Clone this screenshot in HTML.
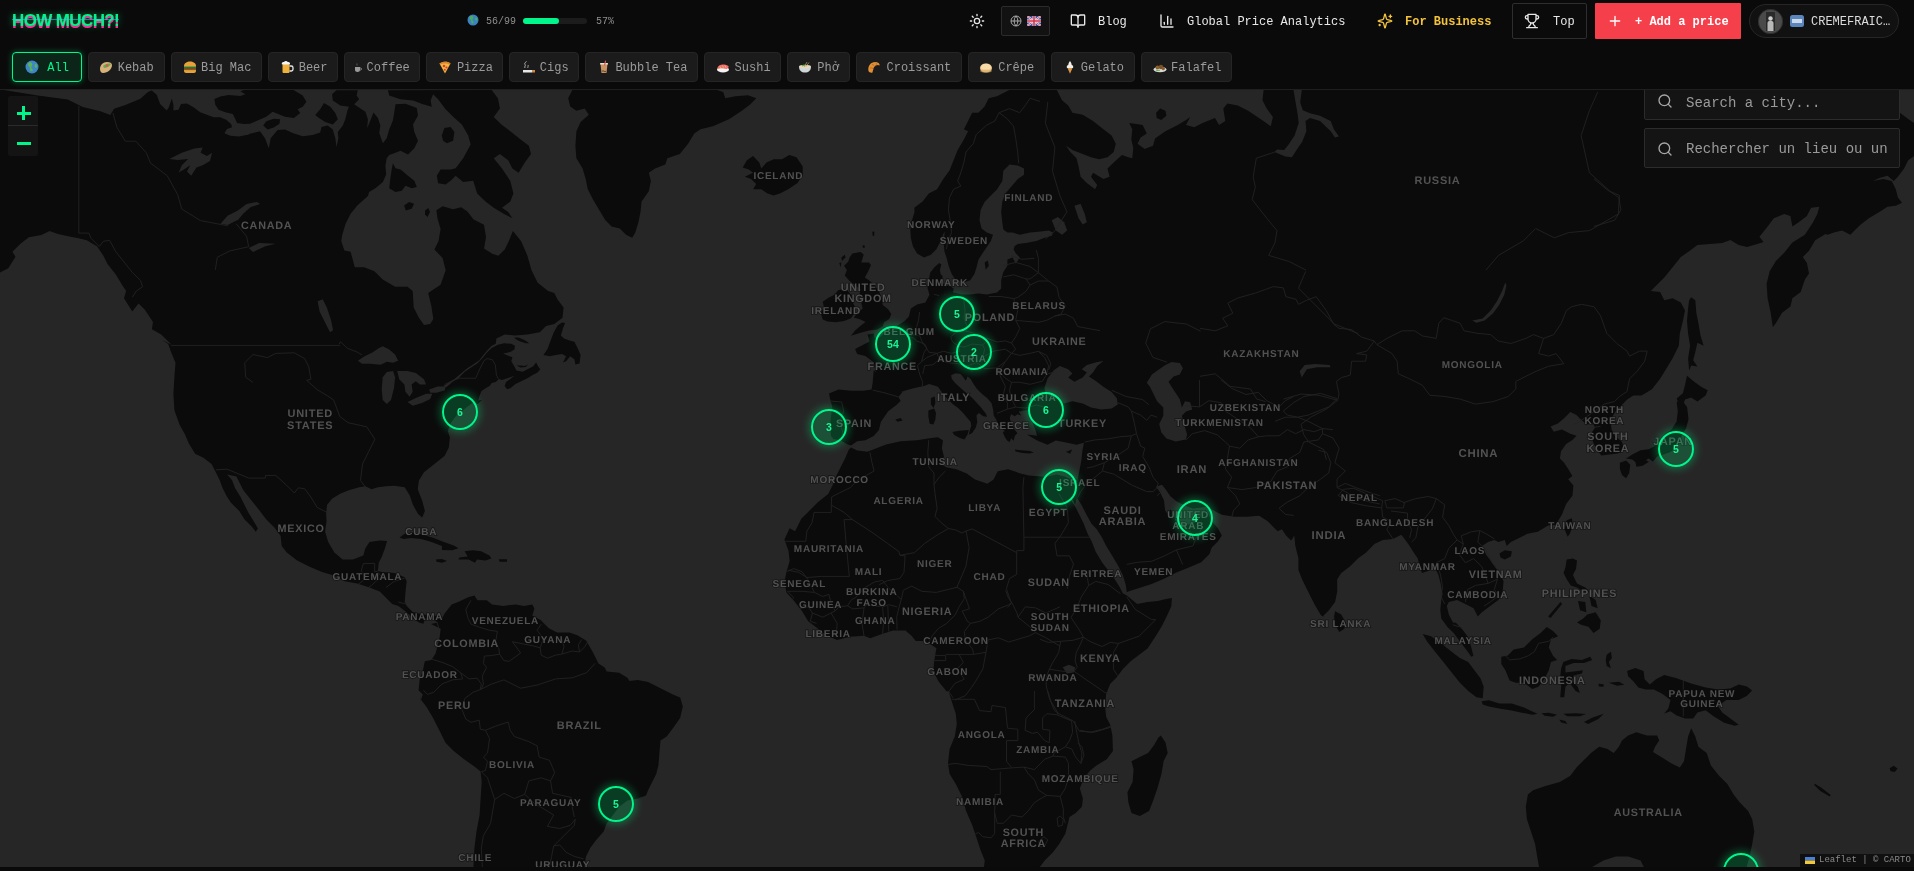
<!DOCTYPE html>
<html lang="en">
<head>
<meta charset="utf-8">
<title>HOW MUCH?! - Global Price Map</title>
<style>
*{box-sizing:border-box;margin:0;padding:0}
html,body{width:1914px;height:871px;overflow:hidden;background:#0a0a0a;color:#e5e5e5;font-family:"Liberation Mono","DejaVu Sans Mono",monospace;font-size:12px}
.abs{position:absolute}
#hdr{will-change:transform;position:absolute;left:0;top:0;width:1914px;height:90px;background:#0a0a0a;border-bottom:1px solid #1f1f1f;z-index:5}
#logo{position:absolute;left:12px;top:10px;font-family:"Liberation Sans",sans-serif;font-weight:bold;font-size:17px;letter-spacing:-0.62px;color:#00f58a;line-height:22px;white-space:nowrap;text-shadow:0 2px 0 #ff2d9a,0 0 7px rgba(0,255,136,.55)}
#logo i{position:absolute;left:0;right:0;top:9px;height:1px;background:#22d3ee;opacity:.55}
.t{position:absolute;white-space:nowrap;line-height:16px;height:16px}
.nav{color:#e8e8e8;font-size:12px;top:13.7px}
.ic{position:absolute}
.ic svg{display:block}
.btn{position:absolute;border:1px solid #2b2b2b;border-radius:2px}
#chips{position:absolute;left:0;top:52px;height:30px}
.chip{position:absolute;top:0;height:30px;background:#1b1b1b;border:1px solid #252525;border-radius:4px;color:#9b9b9b;font-size:12px;line-height:31px;white-space:nowrap}
.chip span{position:absolute;top:0}
.chip svg{position:absolute;top:7px}
.chip.on{background:#0b2519;border:1.5px solid #00f58a;color:#00f58a;box-shadow:0 0 6px rgba(0,255,136,.35)}
#map{will-change:transform;position:absolute;left:0;top:90px;width:1914px;height:777px;background:#262626;overflow:hidden}
#map svg.base{position:absolute;left:0;top:0}
.lbl{font-family:"Liberation Sans",sans-serif;font-weight:bold;font-size:10px;letter-spacing:.75px;fill:#525252;text-rendering:geometricPrecision;text-anchor:middle;paint-order:stroke;stroke:#0d0d0d;stroke-width:1.6px;stroke-opacity:.6}
.mk{position:absolute;width:36px;height:36px;margin:-18px 0 0 -18px;border-radius:50%;border:2.8px solid #00f58a;background:rgba(0,200,105,.26);box-shadow:0 0 9px 2px rgba(0,255,136,.33);color:#19f595;font-family:"Liberation Sans",sans-serif;font-size:10.5px;font-weight:bold;text-align:center;line-height:32.5px}
#zoom{position:absolute;left:8px;top:6px;width:30px;height:60px;background:#141414;border-radius:2px}
#zoom div{position:absolute;left:0;width:30px;height:30px}
#zoom b{position:absolute;background:#00f58a}
.sbox{position:absolute;left:1644px;width:256px;height:40px;background:#141414;border:1px solid #2c2c2c;border-radius:2px;color:#9a9a9a;font-size:14px}
.sbox span{position:absolute;left:41px;top:12px;line-height:16px;white-space:nowrap;overflow:hidden;width:203px}
.sbox svg{position:absolute;left:12px;top:12px}
#attr{position:absolute;left:1800px;top:764px;width:114px;height:13px;background:#101010;color:#8a8a8a;font-size:9px;line-height:13px;white-space:nowrap}
#foot{position:absolute;left:0;top:867px;width:1914px;height:4px;background:#0a0a0a}
</style>
</head>
<body>
<div id="hdr">
  <div id="logo">HOW MUCH?!<i></i></div>

  <!-- progress -->
  <div class="ic" style="left:467px;top:14px"><svg width="12" height="12" viewBox="0 0 12 12"><circle cx="6" cy="6" r="5.5" fill="#3b82c4"/><path d="M3 2.5c1.5-.8 3-.3 3.200 1 .2 1.200-1 1.500-.8 2.700.2 1 1.500 1.300 1.300 2.600-.6.900-2 .9-2.400-.4-.3-1.100.3-1.900-.6-2.700C2.700 4.900 2.200 3.500 3 2.500z" fill="#4caf50"/><path d="M8.500 3.500l1.500.5.300 2-1.300.8-.9-1.500z" fill="#4caf50"/></svg></div>
  <div class="t" style="left:486px;top:13.700px;font-size:10px;color:#8f8f8f">56/99</div>
  <div class="abs" style="left:523px;top:18px;width:64px;height:6px;border-radius:3px;background:#1c1c1c"><div style="width:36px;height:6px;border-radius:3px;background:#00f58a"></div></div>
  <div class="t" style="left:596px;top:13.700px;font-size:10px;color:#8f8f8f">57%</div>

  <!-- sun -->
  <div class="ic" style="left:969px;top:13px"><svg width="16" height="16" viewBox="0 0 24 24" fill="none" stroke="#e8e8e8" stroke-width="2" stroke-linecap="round"><circle cx="12" cy="12" r="4"/><path d="M12 2v2M12 20v2M4.900 4.900l1.400 1.400M17.700 17.700l1.400 1.400M2 12h2M20 12h2M4.900 19.100l1.400-1.400M17.700 6.300l1.400-1.400"/></svg></div>
  <!-- lang -->
  <div class="btn" style="left:1001px;top:6px;width:49px;height:29.500px;background:#121212">
    <svg class="abs" style="left:8px;top:8px" width="12" height="12" viewBox="0 0 24 24" fill="none" stroke="#a8a8a8" stroke-width="2"><circle cx="12" cy="12" r="10"/><path d="M2 12h20M12 2a15 15 0 0 1 0 20M12 2a15 15 0 0 0 0 20"/></svg>
    <svg class="abs" style="left:25px;top:9px" width="14" height="10" viewBox="0 0 14 10"><rect width="14" height="10" rx="1.500" fill="#3a4a9a"/><path d="M0 0l14 10M14 0L0 10" stroke="#e8e8f0" stroke-width="2"/><path d="M0 0l14 10M14 0L0 10" stroke="#d8324a" stroke-width=".8"/><path d="M7 0v10M0 5h14" stroke="#e8e8f0" stroke-width="3"/><path d="M7 0v10M0 5h14" stroke="#d8324a" stroke-width="1.600"/></svg>
  </div>
  <!-- blog -->
  <div class="ic" style="left:1070px;top:13px"><svg width="16" height="16" viewBox="0 0 24 24" fill="none" stroke="#e8e8e8" stroke-width="2" stroke-linecap="round" stroke-linejoin="round"><path d="M12 7v14"/><path d="M3 18a1 1 0 0 1-1-1V4a1 1 0 0 1 1-1h5a4 4 0 0 1 4 4 4 4 0 0 1 4-4h5a1 1 0 0 1 1 1v13a1 1 0 0 1-1 1h-6a3 3 0 0 0-3 3 3 3 0 0 0-3-3z"/></svg></div>
  <div class="t nav" style="left:1098px">Blog</div>
  <!-- analytics -->
  <div class="ic" style="left:1159px;top:13px"><svg width="16" height="16" viewBox="0 0 24 24" fill="none" stroke="#e8e8e8" stroke-width="2" stroke-linecap="round" stroke-linejoin="round"><path d="M3 3v16a2 2 0 0 0 2 2h16"/><path d="M18 17V9"/><path d="M13 17V5"/><path d="M8 17v-3"/></svg></div>
  <div class="t nav" style="left:1187px">Global Price Analytics</div>
  <!-- business -->
  <div class="ic" style="left:1377px;top:13px"><svg width="16" height="16" viewBox="0 0 24 24" fill="none" stroke="#f3c33c" stroke-width="2" stroke-linecap="round" stroke-linejoin="round"><path d="M9.900 15.500A2 2 0 0 0 8.500 14.100l-6.100-1.600a.5.5 0 0 1 0-1l6.100-1.600A2 2 0 0 0 9.900 8.500l1.600-6.100a.5.5 0 0 1 1 0l1.600 6.100a2 2 0 0 0 1.400 1.400l6.100 1.600a.5.5 0 0 1 0 1l-6.100 1.600a2 2 0 0 0-1.400 1.400l-1.600 6.100a.5.5 0 0 1-1 0z"/><path d="M20 3v4M22 5h-4M4 17v2M5 18H3"/></svg></div>
  <div class="t nav" style="left:1405px;color:#f3c33c;font-weight:bold">For Business</div>
  <!-- top -->
  <div class="btn" style="left:1512px;top:3px;width:75px;height:36px;border-color:#2e2e2e;background:#0b0b0b">
    <svg class="abs" style="left:11px;top:9px" width="16" height="16" viewBox="0 0 24 24" fill="none" stroke="#e8e8e8" stroke-width="2" stroke-linecap="round" stroke-linejoin="round"><path d="M6 9H4.500a2.500 2.500 0 0 1 0-5H6M18 9h1.500a2.500 2.500 0 0 0 0-5H18M4 22h16M10 14.700V17c0 .6-.5 1-1 1.200C7.800 18.800 7 20.200 7 22M14 14.700V17c0 .6.500 1 1 1.200 1.200.6 2 2 2 3.800M18 2H6v7a6 6 0 0 0 12 0z"/></svg>
    <div class="t" style="left:40px;top:9.700px;color:#e8e8e8">Top</div>
  </div>
  <!-- add -->
  <div class="abs" style="left:1595px;top:3px;width:146px;height:36px;background:#f5404c;border-radius:1px">
    <svg class="abs" style="left:12px;top:10px" width="16" height="16" viewBox="0 0 24 24" fill="none" stroke="#fff" stroke-width="2" stroke-linecap="round"><path d="M5 12h14M12 5v14"/></svg>
    <div class="t" style="left:40px;top:10.700px;color:#fff;font-weight:bold">+ Add a price</div>
  </div>
  <!-- user -->
  <div class="abs" style="left:1749px;top:4px;width:150px;height:34px;border:1px solid #262626;border-radius:17px;background:#111">
    <svg class="abs" style="left:8px;top:4px" width="25" height="25" viewBox="0 0 25 25"><circle cx="12.500" cy="12.500" r="12.200" fill="#4a4a4a" stroke="#2e2e2e"/><rect x="8" y="3" width="9" height="19" fill="#2a2a2a"/><path d="M9.500 22v-8c0-3 6-3 6 0v8z" fill="#b9b9b9"/><circle cx="12.500" cy="9.500" r="2.200" fill="#cfcfcf"/></svg>
    <svg class="abs" style="left:40px;top:10px" width="14" height="12" viewBox="0 0 14 12"><rect width="14" height="12" rx="2.500" fill="#5b86bd"/><rect x="2" y="4" width="10" height="4" fill="#dfe8f3" opacity=".85"/></svg>
    <div class="t" style="left:61px;top:8.700px;color:#dcdcdc">CREMEFRAIC…</div>
  </div>

  <div id="chips">
<div class="chip on" style="left:12.4px;width:69.2px"><svg width="14" height="14" viewBox="0 0 14 14" style="left:11.6px"><circle cx="7" cy="7" r="6.500" fill="#3f86c9"/><path d="M3.500 3c1.800-1 3.600-.4 3.800 1.200.2 1.400-1.200 1.800-1 3.200.3 1.200 1.800 1.600 1.600 3.100-.7 1.100-2.400 1.100-2.900-.5-.4-1.300.4-2.300-.7-3.200C3.100 5.800 2.500 4.200 3.500 3z" fill="#5bb450"/><path d="M10 4l1.800.6.400 2.400-1.600 1-1.100-1.800z" fill="#5bb450"/></svg><span style="left:33.9px">All</span></div>
<div class="chip" style="left:88.3px;width:76.6px"><svg width="14" height="14" viewBox="0 0 14 14" style="left:10.2px"><path d="M1 9c0-4 3-7 7-7 3 0 5 1 5 3 0 4-4 8-9 8-2 0-3-2-3-4z" fill="#d8b27a"/><path d="M4 6c2-2 5-3 8-2-1 2-4 4-7 4z" fill="#6aa84f"/><circle cx="8" cy="5.500" r="1.200" fill="#d9534f"/></svg><span style="left:28.4px">Kebab</span></div>
<div class="chip" style="left:171.2px;width:90.7px"><svg width="14" height="14" viewBox="0 0 14 14" style="left:10.8px"><path d="M1 6c0-3 3-4.500 6-4.500S13 3 13 6z" fill="#e9a23b"/><rect x="1" y="6" width="12" height="1.600" fill="#5cab3f"/><rect x="1" y="7.600" width="12" height="2.200" fill="#7a4a26"/><rect x="1" y="9.800" width="12" height="1" fill="#f2c230"/><path d="M1 10.800h12c0 1.500-1 2.200-2 2.200H3c-1 0-2-.7-2-2.200z" fill="#e9a23b"/></svg><span style="left:28.8px">Big Mac</span></div>
<div class="chip" style="left:268.2px;width:69.6px"><svg width="14" height="14" viewBox="0 0 14 14" style="left:10.8px"><rect x="2.500" y="4" width="7" height="9" rx="1" fill="#f0b13a"/><path d="M9.500 6h1.800c1 0 1.700.7 1.700 1.700v1.600c0 1-.7 1.700-1.700 1.700H9.500" fill="none" stroke="#e8e8e8" stroke-width="1.300"/><path d="M2 4.500c-.8-1.500.5-3 2-2.500.8-1.300 3-1.300 3.800 0 1.500-.5 2.800 1 2 2.500z" fill="#f5f5f5"/></svg><span style="left:29.5px">Beer</span></div>
<div class="chip" style="left:344.1px;width:75.9px"><svg width="14" height="14" viewBox="0 0 14 14" style="left:6.4px"><path d="M4 7h5v3c0 1-1 2-2.500 2S4 11 4 10z" fill="#9a9a9a"/><path d="M9 8h1c.6 0 .6 2 0 2H9" fill="none" stroke="#9a9a9a" stroke-width=".8"/><path d="M6 5.500c-.5-.8.500-1.200 0-2" stroke="#777" stroke-width=".7" fill="none"/></svg><span style="left:21.5px">Coffee</span></div>
<div class="chip" style="left:426.4px;width:76.3px"><svg width="14" height="14" viewBox="0 0 14 14" style="left:10.6px"><path d="M1.500 3.500C5 1 10 1 12.500 3.500L7 13.500z" fill="#f2b544"/><path d="M1.500 3.500C5 1 10 1 12.500 3.500l-.8 1.300C9.500 3 4.500 3 2.300 4.800z" fill="#d9822b"/><circle cx="6" cy="6" r="1.300" fill="#d8402f"/><circle cx="8.500" cy="7.500" r="1.100" fill="#d8402f"/><circle cx="6.800" cy="9.800" r="1" fill="#d8402f"/></svg><span style="left:29.5px">Pizza</span></div>
<div class="chip" style="left:509px;width:69.6px"><svg width="14" height="14" viewBox="0 0 14 14" style="left:12.0px"><rect x="1" y="10" width="9" height="2.500" fill="#e6e6e6"/><rect x="10" y="10" width="3" height="2.500" fill="#c98a4a"/><path d="M3 8c-1-1.500 1-2 0-3.500S4 2 4.500 1.500" fill="none" stroke="#b5b5b5" stroke-width="1"/><path d="M6 8c-.8-1 .8-1.700 0-3" fill="none" stroke="#b5b5b5" stroke-width=".9"/></svg><span style="left:29.8px">Cigs</span></div>
<div class="chip" style="left:585.3px;width:112.6px"><svg width="14" height="14" viewBox="0 0 14 14" style="left:11.2px"><path d="M3.500 4h7l-1 9h-5z" fill="#c99363"/><rect x="3" y="3" width="8" height="1.500" rx=".6" fill="#e9e2d6"/><rect x="7.500" y=".5" width="1.200" height="5" fill="#d9534f" transform="rotate(12 8 3)"/><circle cx="6" cy="11" r=".8" fill="#4a3424"/><circle cx="8" cy="11.500" r=".8" fill="#4a3424"/></svg><span style="left:29.1px">Bubble Tea</span></div>
<div class="chip" style="left:704.2px;width:76.6px"><svg width="14" height="14" viewBox="0 0 14 14" style="left:10.5px"><ellipse cx="7" cy="9.500" rx="6" ry="3" fill="#f4f4f4"/><path d="M1.500 7.500C3 4.500 7 3.500 12.500 6c.4 1.500-.5 2.700-2 3C7 8 4 8 1.500 9z" fill="#ef6f5e"/><path d="M4 6.500l1 1.700M6.500 5.600l1 2M9 5.500l1 2.200" stroke="#f9b5a8" stroke-width=".8"/></svg><span style="left:29.4px">Sushi</span></div>
<div class="chip" style="left:787.2px;width:62.5px"><svg width="14" height="14" viewBox="0 0 14 14" style="left:9.8px"><path d="M1 6.500h12c0 4-2.500 6-6 6s-6-2-6-6z" fill="#cfd6da"/><ellipse cx="7" cy="6.500" rx="6" ry="1.800" fill="#e7d9b5"/><path d="M4 6c1-.8 2-.8 3 0" stroke="#5cab3f" stroke-width="1.200" fill="none"/><path d="M9 2l-2.500 4.500M11 2.500L8 6.500" stroke="#a98b6a" stroke-width=".8"/></svg><span style="left:29.1px">Phở</span></div>
<div class="chip" style="left:856.4px;width:105.3px"><svg width="14" height="14" viewBox="0 0 14 14" style="left:10.1px"><path d="M1.500 11C.5 6 4 1.500 9 2c2.500.3 4 2 3.500 3.500-1-.8-3-1-4.500.500C6 8 6 10.500 5.500 12.500 4 13 2 12.500 1.500 11z" fill="#e08f35"/><path d="M3 8c1.500-.5 3 .3 3.600 1.500M5 4.500c1.500.2 2.600 1.300 2.800 2.500M8.500 2.800c1 .6 1.400 1.600 1.300 2.600" stroke="#b5651d" stroke-width=".8" fill="none"/></svg><span style="left:29.1px">Croissant</span></div>
<div class="chip" style="left:968.1px;width:76.6px"><svg width="14" height="14" viewBox="0 0 14 14" style="left:10.4px"><ellipse cx="7" cy="8" rx="6" ry="4.500" fill="#f0c88a"/><ellipse cx="7" cy="7.200" rx="5" ry="3.400" fill="#f7dcaa"/><ellipse cx="7" cy="11" rx="6" ry="1.600" fill="#d9a860" opacity=".6"/></svg><span style="left:29.1px">Crêpe</span></div>
<div class="chip" style="left:1051.4px;width:83.2px"><svg width="14" height="14" viewBox="0 0 14 14" style="left:10.6px"><path d="M4.500 8h5L7 13.800z" fill="#d9964a"/><path d="M4 8c-.8-1.500.3-2.800 1.300-3C5.300 3.500 6 2.500 7 1c1 1.500 1.700 2.500 1.700 4 1 .2 2.100 1.500 1.300 3z" fill="#f3efe6"/></svg><span style="left:28.4px">Gelato</span></div>
<div class="chip" style="left:1141.3px;width:90.3px"><svg width="14" height="14" viewBox="0 0 14 14" style="left:10.7px"><ellipse cx="7" cy="9.500" rx="6.500" ry="2.800" fill="#d8d8d8"/><circle cx="4.500" cy="7.500" r="2" fill="#8a5f2c"/><circle cx="8" cy="7" r="2.200" fill="#7a5226"/><circle cx="10.300" cy="8.500" r="1.700" fill="#8a5f2c"/><path d="M3 10c1.500.8 3 .8 4 0" stroke="#5cab3f" stroke-width="1" fill="none"/></svg><span style="left:28.8px">Falafel</span></div>
  </div>
</div>

<div id="map">
<svg class="base" width="1914" height="777" viewBox="0 0 1914 777">
<g id="land">
<path d="M0,0 3.8,0 37.6,5.5 67.7,9.5 82.8,17.1 100.3,21.3 110.3,25.1 114.1,18.8 125.4,15 140.4,8.8 148,2 151.7,0.5 156.7,4.7 160.1,13.9 166.8,20.6 168.8,17.2 171.8,8.5 173.4,14.7 173.4,20.6 178.5,19.7 181,13.9 186.8,13.5 193.5,17.2 200.2,22.2 206.9,24.8 213.6,27.3 220.3,27.3 226.1,29.8 231.1,34 232,37.3 227,39 224.4,43.2 230.3,45.7 238.7,46.5 247.9,44.8 250,43.8 260,41.3 265,48.2 268.8,58.2 270.7,48.2 277.6,40 285.1,39.4 292.6,43.1 302.7,46.3 312.7,45 320.2,42.5 321.5,36.9 327.7,35.6 332.8,39.4 335.3,48.2 336.5,56.9 338.4,48.2 337.8,41.9 342.8,35.6 345.3,29.3 347.8,19.3 349.1,16.8 340.3,15.6 332.8,10.5 332.1,4.3 336.5,0.3 357.8,0.3 356.6,5.5 359.1,9.3 354.1,14.3 357.8,16.8 365.4,21.8 367.9,29.3 367.2,38.1 370.4,30.6 373.5,22.5 377.9,28.1 380.4,35.6 379.2,43.1 382.9,53.2 386.7,48.2 389.2,39.4 392.9,30.6 394.2,23.1 395.5,14.3 405.5,13.7 416.8,18.1 418,25.6 413,34.4 414.3,41.9 418,50.7 414.3,58.2 408,64.5 400.5,60.7 394.2,63.2 389.2,65.1 386.7,68.2 385.4,75.7 386.1,84.5 382.9,92 375.4,98.3 369.1,102.1 367.9,106 357.3,115.4 350.6,123.7 345.6,133.8 342.2,145 341.3,151.3 344.4,160.6 350.6,161.7 354.8,177.2 364.1,177.2 374.4,181.3 382.7,189.6 395.1,196.8 407.5,196.8 412.7,201 413.7,217.5 418.9,227.8 424,235.1 430.2,234 433.3,228.9 431.3,215.4 428.2,203 440.6,194.8 445.7,180.3 442.6,167.9 434.4,159.6 438.5,151.3 440.6,138.9 437.5,128.6 436.4,120.3 442.6,116.2 453,119.3 461.2,117.2 467.4,121.4 473.6,129.6 484,134.8 486,147.2 484,158.6 492.2,163.7 498.4,165.8 504.7,159.6 508.8,151.3 512.9,141 521.2,151.3 527.4,165.8 531.5,180.3 537.7,192.7 548.1,201 554.3,203 557.4,209.2 563.6,217.5 562.5,227.8 554.3,234 546,236.1 539.8,242.3 527.4,244.4 515,245.4 504.7,244.4 496.4,248.5 495.8,253.8 491.7,255.8 487.5,260 483.4,265.1 479.3,270.3 473.1,274.4 466.9,278.6 460.7,283.7 454.5,288.9 448.3,293 443.1,296.1 446.2,297.2 452.4,292 458.6,287.9 464.8,281.7 471,277.5 477.2,273.4 482.4,268.2 486.5,263.1 491.7,257.9 497.9,254.8 504.1,253.3 511.3,253.8 514.9,255.8 514.4,259.5 510.3,262 506.1,263.1 503,263.6 508.2,265.7 512.4,267.2 511.3,271.3 514.4,276.5 516.5,280.6 522.7,281.7 528.9,278.6 533,276.5 536.1,272.4 538.2,276.5 540.3,279.6 537.2,282.7 533,284.8 527.9,287.9 521.7,291 515.5,294.1 510.3,298.2 507.2,299.3 504.6,296.1 506.1,292 510.3,288.9 514.4,285.8 508.2,287.9 502,289.9 498.9,288.9 495.8,292 491.7,293 489.6,296.1 485.5,298.2 481.3,301.3 479.3,306.5 478.2,310.6 481.9,309.9 477.8,314.1 473.6,312 465.4,318.2 457.1,324.4 450.9,332.7 447.8,341 449.9,347.2 448.8,357.5 444.7,365.8 434.4,374 424,382.3 418.9,390.6 417.8,398.8 418.1,400.3 422.2,410.7 424.9,421 422.2,427.6 418.1,424.1 412.9,414.8 409.8,405.5 404.7,397.2 394.3,395.8 386,396.2 377.8,397.2 371.6,399.3 365.4,396.2 359.2,397.2 348.8,400.3 340.6,403.4 332.3,408.6 327.1,414.8 326.1,423.1 326.5,431.3 325.1,441.7 328.2,452 334.4,462.4 342.6,469.6 353,469.6 363.3,465.5 365.4,458.2 369.5,452 379.8,450.6 387.1,451 385,458.2 381.9,466.5 378.8,472.7 377.8,481 381.9,482 394.3,483 404.7,487.2 406.7,491.3 405.7,499.6 404.7,512 406.7,516.1 412.9,522.3 423.3,524.4 433.6,525.4 441.9,526.4 440.8,538.8 437.7,532.6 431.5,527.5 425.3,528.5 423.3,533.7 419.1,532.6 412.9,528.5 406.7,522.3 398.4,516.1 392.2,514 386,507.8 379.8,501.6 369.5,497.5 357.1,493.4 344.7,491.3 332.3,485.1 322,482 309.6,476.8 297.2,470.6 286.8,462.4 281.7,456.1 280.6,445.8 274.4,437.5 266.1,429.3 259.9,421 251.7,410.7 243.4,400.3 238.2,390 236.4,386.4 227.1,384.4 232,390 235.1,398.3 240.3,406.5 244.4,414.8 248.6,423.1 253.7,431.3 257.9,438.6 255.8,441.7 251.7,436.5 244.4,429.3 239.3,421 231,412.7 226.9,406.5 222.7,398.3 219.6,390 215.8,382.3 211.6,374 203.4,367.8 195.1,363.7 188.9,353.4 184.8,344.1 179.6,334.8 174.4,320.3 173.4,303.7 174.4,287.2 175.5,272.7 171.3,262.4 168.2,254.1 162,250 171.6,254.7 161.2,244.4 151.9,239.2 153,232 144.7,219.6 138.5,213.4 132.3,221.6 124,208.2 126.1,201 122,194.8 115.8,184.4 107.5,174.1 103.4,165.8 97.2,156.5 86.8,150.3 78.6,148.2 68.2,146.2 57.9,144.1 49.6,141 41.3,145.1 28.9,147.2 20.7,153.4 12.4,161.7 15.5,166.8 8.3,178.2 0,182.4Z" fill="#0b0b0b"/>
<path d="M431,534.1 437.6,532.6 441.3,529.9 444.4,523.7 451.7,514.4 459.9,511.3 468.2,507.2 474.4,505.6 477.5,510.3 486.8,510.3 492,514.4 503.4,515.9 515.8,514.4 524,515.9 532.3,514.4 534.4,518.6 532.3,525.8 540.6,529.9 548.8,538.2 557.1,542.4 569.5,542.4 577.8,545.5 586,550.6 592.2,561 596.4,569.2 598.4,573.4 604.7,577.5 606.7,581.6 619.1,582.7 627.4,587.8 629.5,590.9 637.7,589.9 648.1,592 660.5,598.2 672.9,604.4 680.1,607.5 680.1,607.2 682.8,616.5 680.1,627.9 672.9,638.2 666.7,646.5 660.5,650.6 659.4,663 658.4,675.4 656.3,683.7 652.2,692 648.1,700.2 646,705.4 637.7,708.5 627.4,710.6 619.1,716.8 606.7,733.3 603.6,741.6 596.4,749.8 590.2,758.1 586,766.4 584,778.8 473.4,778.8 474.4,758.1 476.5,741.6 479.6,725 480.6,708.5 481.7,692 480.6,681.6 474.4,676.5 464.1,669.2 453.7,660.9 445.5,652.7 439.3,640.3 433.1,627.9 426.9,617.5 420.7,609.3 419.6,601 420.7,610.6 422.7,604.4 418.6,600.2 419.6,589.9 422.7,581.6 424.8,571.3 431.4,570.1 435.6,563.6 437.6,555.4 439.7,547.1 440.7,538.8Z" fill="#0b0b0b"/>
<path d="M399.5,447.5 404.7,443.7 412.9,442.7 423.3,444.8 433.6,447.9 443.9,452 454.3,455.7 458.4,458.2 452.2,460.3 441.9,459.9 441.9,456.1 431.5,452 421.2,448.9 410.9,447.9 403.6,448.9Z" fill="#0b0b0b"/>
<path d="M464.6,461.3 472.9,460.3 481.1,461.3 489.4,465.5 491.5,468.6 485.3,470.6 477,469.6 474.9,472.7 468.7,469.6 458.4,469.6 459.4,467.5 467.7,466.5Z" fill="#0b0b0b"/>
<path d="M435.7,469.6 441.9,469 447,471 441.9,472.7 436.7,471.7Z" fill="#0b0b0b"/>
<path d="M498.7,469.2 507,469.2 507,471.7 499.7,471.7Z" fill="#0b0b0b"/>
<path d="M543.4,265.1 547.5,258.9 550.6,250.7 553.7,242.4 557.8,235.2 562,232.6 565.1,233.1 563,238.3 560.9,245.5 564,248.6 570.2,250.7 574.4,251.7 576.4,255.8 578.5,260 580.6,265.1 579.5,273.4 575.4,274.4 574.4,269.3 570.2,266.2 566.1,271.3 563,272.4 566.1,266.2 562,264.1 555.8,265.1 549.6,266.2Z" fill="#0b0b0b"/>
<path d="M514.4,247.6 518.6,247.6 524.8,250.2 529.4,253.3 525.8,253.3 519.6,251.2 515.5,249.1Z" fill="#0b0b0b"/>
<path d="M516.5,275.5 520.6,277.5 525.8,277 527.9,274.4 524.8,276 520.6,275.5Z" fill="#0b0b0b"/>
<path d="M357.9,270.7 364.1,266.5 372.4,262.4 378.6,258.3 382.7,256.2 388.9,259.3 395.1,264.5 398.2,270.7 393,272.7 386.8,271.7 380.6,274.8 370.3,273.8 362,273.8Z" fill="#262626"/>
<path d="M382.7,287.2 386.8,282 393,281 395.1,287.2 394.1,297.5 391,309.9 386.8,314.1 382.7,309.9 381.7,299.6Z" fill="#262626"/>
<path d="M397.2,281 407.5,281 415.8,283.1 424,289.3 426.1,294.4 419.9,294.4 415.8,291.3 411.6,294.4 412.7,301.7 409.6,306.8 405.4,301.7 404.4,294.4 399.2,289.3Z" fill="#262626"/>
<path d="M407.5,312 415.8,307.9 426.1,303.7 432.3,303.7 430.2,308.9 422,313 412.7,315.7Z" fill="#262626"/>
<path d="M429.2,299.6 437.5,296.5 445.7,296.5 444.7,300.6 436.4,302.7 430.2,302.7Z" fill="#262626"/>
<path d="M317.6,211.3 322.7,209.2 326.9,217.5 331,229.9 333.1,240.2 330,242.3 324.8,232 319.6,221.6Z" fill="#262626"/>
<path d="M169.3,69.1 181.8,62.8 194.3,58.6 202.7,57.6 200.6,62.8 206.9,65.9 212.1,62.8 210,71.1 202.7,75.3 196.4,77.4 191.2,85.8 187,81.6 190.2,75.3 183.9,79.5 178.7,82.6 181.8,75.3 188.1,69.1 177.6,70.1Z" fill="#262626"/>
<path d="M220.5,133.8 227.8,125.5 232,123.4 238.2,120.3 246.6,114 257,111.9 260.2,114 250.8,117.1 243.4,123.4 238.2,129.7 234,131.8 227.8,134.9Z" fill="#262626"/>
<path d="M248.7,157.9 259.1,153.1 275.8,153.7 265.4,156.2 252.9,162.1Z" fill="#262626"/>
<path d="M214.4,8.9 220.3,6.4 228.6,5.1 240.3,5.9 245.4,4.3 240.3,1.3 245.4,-0.5 293.9,-0.5 293.9,0.3 302.7,5.5 306.4,11.8 302.7,16.8 297.6,19.3 300.2,23.1 293.9,28.1 285.1,26.8 278.8,24.3 272.6,21.8 266.3,26.8 257.5,30.6 250,33.7 243.7,34 237,33.1 235.3,28.9 232.8,23.9 225.3,22.2 218.6,19.7 215.3,14.7Z" fill="#0b0b0b"/>
<path d="M263.2,35.6 266.3,31.2 273.8,28.7 280.1,29.3 279.5,33.7 273.8,37.5 267.6,39.4Z" fill="#0b0b0b"/>
<path d="M315.2,25 320.2,19.3 324,13 330.3,16.8 335.3,23.1 337.8,29.3 332.8,34.4 325.2,31.9 319,28.1Z" fill="#0b0b0b"/>
<path d="M441.8,45.6 444.4,38.1 450.6,36.9 454.4,41.9 453.1,50.7 446.9,53.2 443.1,50.7Z" fill="#0b0b0b"/>
<path d="M392.9,73.2 395.5,78.3 400.5,79.5 408,85.8 414.3,90.8 416.8,97.1 411.8,98.3 405.5,95.8 401.7,100.8 395.5,102.1 389.2,98.3 390.4,88.3 391.7,79.5Z" fill="#0b0b0b"/>
<path d="M404.1,115.4 409.1,112 414.1,113.7 411.6,118.7 405.8,120.4Z" fill="#0b0b0b"/>
<path d="M425,120.4 428.3,117.9 430,122.1 427.5,127.1 425,124.6Z" fill="#0b0b0b"/>
<path d="M387.9,0.3 389.2,5.5 400.5,9.3 413,10.5 423,14.3 431.8,16.8 430.6,10.5 433.1,4.3 438.1,9.3 445.6,19.3 453.1,26.8 461.9,34.4 468.2,45.6 470.7,54.4 463.2,68.2 455.6,78.3 450.6,79.5 440.6,79.5 436.8,85.8 438.1,93.3 445.6,94.6 450.6,90.8 455.6,85.8 463.2,92 473.2,90.8 477.2,103.4 485.5,111.6 493.7,117.8 504.1,124 512.4,128.2 508.2,122 502,117.8 510.3,111.6 513.4,103.4 510.3,91 502,78.6 493.7,68.2 499.9,64.1 508.2,70.3 512.4,78.6 518.6,82.7 524.8,72.4 531,64.1 528.9,55.8 520.6,49.6 510.3,41.3 502,35.1 493.7,26.9 499.9,18.6 497.9,8.3 491.7,0Z" fill="#0b0b0b"/>
<path d="M572.3,0 568.2,8.3 570.2,16.5 576.4,20.7 584.7,18.6 588.8,24.8 580.6,32 576.4,41.3 575.4,55.8 576.4,68.2 582.6,78.6 585.7,88.9 587.8,99.2 593,109.6 599.2,119.9 605.4,130.2 611.6,136.4 619.8,138.5 626,144.7 632.2,147.8 635.3,142.6 638.4,132.3 640.5,122 641.6,111.6 648.8,101.3 650.9,91 648.8,82.7 655,78.6 665.3,74.4 667.4,68.2 679.8,64.1 688.1,53.7 694.3,43.4 700.5,39.3 712.9,36.2 729.4,28.9 741.8,20.7 750.1,14.5 756.3,8.3 748,5.2 735.6,6.2 725.3,8.3 723.2,2.1 717,0Z" fill="#0b0b0b"/>
<path d="M742.7,77.5 746.9,70.3 753.1,66.1 759.3,72.4 761.3,78.6 766.5,72.4 773.7,69.3 782,69.3 789.3,65.1 796.5,67.2 802.7,76.5 802.7,84.8 797.5,93 788.2,99.2 779.9,103.4 773.7,105.4 767.5,103.4 761.3,99.2 753.1,99.2 756.2,94.1 751,88.9 744.8,86.8 753.1,82.7 748.9,79.6Z" fill="#0b0b0b"/>
<path d="M1009.3,0 1056.8,0 1062,10.3 1068.2,15.5 1072.4,22.7 1082.7,24.8 1093,31 1103.4,39.3 1111.6,45.5 1115.8,53.7 1113.7,62 1107.5,67.2 1099.2,69.3 1091,67.2 1082.7,64.1 1072.4,59.9 1066.1,55.8 1070.3,62 1076.5,68.2 1078.6,76.5 1080.6,86.8 1086.8,93 1095.1,99.2 1097.2,95.1 1091,86.8 1093,82.7 1103.4,88.9 1109.6,86.8 1107.5,78.6 1113.7,72.4 1122,65.1 1128.2,67.2 1132.3,68.2 1133.3,57.9 1131.3,49.6 1132.3,39.3 1129.2,33.1 1136.4,34.1 1142.6,35.1 1146.8,43.4 1140.6,47.5 1137.5,53.7 1144.7,58.9 1153,55.8 1155,48.6 1165.4,41.3 1177.8,35.1 1186,30 1190.2,26.9 1186,35.1 1194.3,37.2 1202.6,33.1 1215,27.9 1219.1,35.1 1225.3,31 1223.3,18.6 1227.4,13.4 1237.7,15.5 1248.1,20.7 1260.5,28.9 1270.8,36.2 1272.9,26.9 1266.7,18.6 1262.5,10.3 1263.6,0 1293.5,0 1295.6,12.4 1297.7,24.8 1298.7,33.1 1294.6,45.5 1288.4,54.8 1284.2,59.9 1277,59.5 1274.5,62 1285.3,66.6 1291.9,67.2 1296.6,59.9 1302.2,51.7 1306.4,41.3 1305.5,31 1310.1,27.9 1320,31 1330.7,41.3 1334.9,47.5 1339,46.5 1333.9,39.3 1330.7,31 1320,25.8 1310.1,23.2 1302.8,20.3 1300.2,12.4 1301.8,0 1899.9,0 1899.9,22.7 1908.2,28.9 1914,33.1 1914,66.1 1908.2,70.3 1904.1,78.6 1897.9,86.8 1893.7,91 1887.5,85.8 1879.3,87.9 1873.1,91 1883.4,88.9 1891.7,91 1895.8,99.2 1897.9,107.5 1902,112.7 1895.8,115.8 1887.5,116.8 1879.3,122 1868.9,128.2 1860.7,134.4 1854.5,140.6 1850.3,144.7 1842.1,140.6 1833.8,142.6 1827.6,144.7 1825.5,144.1 1815.2,150.3 1809,160.7 1802.8,166.9 1806.9,173.1 1809,183.4 1804.9,189.6 1800.7,202 1792.4,208.2 1790.4,216.5 1782.1,222.7 1775.9,233 1772.8,237.2 1770.7,222.7 1767.6,208.2 1766.6,193.7 1769.7,181.3 1775.9,171 1784.2,162.7 1792.4,152.4 1804.9,144.7 1813.1,132.3 1817.3,124 1819.3,116.8 1811.1,117.8 1806.9,126.1 1798.7,132.3 1792.4,136.4 1790.4,126.1 1784.2,124 1773.8,128.2 1767.6,136.4 1759.4,146.8 1763.5,151.9 1757.3,154 1747,157.1 1738.7,155 1730.4,149.9 1722.2,153 1709.8,154 1697.4,155 1689.1,161.2 1680.8,166.9 1672.6,177.2 1664.3,187.5 1656,195.8 1650.8,201 1660.1,202 1664.3,210.3 1672.6,208.2 1680.8,212.4 1685,220.6 1682.9,231 1679.8,243.4 1678.8,255.8 1672.6,268.2 1666.4,278.5 1660.1,288.8 1651.9,299.2 1641.5,305.4 1633.3,305.4 1627.1,309.5 1619.9,316.9 1615.8,321 1612.7,326.2 1610.6,331.3 1611.6,339.6 1614.7,345.8 1622,352 1624,360.3 1617.8,363.4 1609.6,364.4 1601.3,365.5 1597.2,360.3 1593,352 1591,343.7 1595.1,337.5 1593,333.4 1586.8,334.4 1580.6,329.3 1576.5,325.1 1570.3,322 1564.1,328.2 1557.9,333.4 1550.6,336.5 1553.7,341.7 1562,339.6 1570.3,343.7 1576.5,345.8 1572.4,349.9 1566.1,354.1 1561,361.3 1559.9,368.6 1564.1,372.7 1568.2,378.9 1572.4,386.1 1568.2,389.2 1573.4,395.4 1572.4,405.8 1566.1,414 1562,424.4 1555.8,434.7 1548.1,435.5 1537.7,441.7 1527.4,443.7 1519.1,447.9 1510.9,452 1506.7,456.1 1504.7,449.9 1498.4,452 1494.3,449.9 1488.1,452 1481.9,456.1 1486,464.4 1492.2,472.7 1498.4,481 1503.6,491.3 1502.6,501.6 1498.4,509.9 1490.2,516.1 1481.9,522.3 1477.8,526.4 1473.6,518.2 1465.4,514 1457.1,509.9 1448.8,512 1446.8,516.1 1448.8,524.4 1453,532.6 1455.8,532.7 1462,538.9 1468.2,547.2 1471.3,557.5 1473.4,565.8 1471.3,566.8 1466.1,559.6 1459.9,551.3 1453.7,543.1 1447.5,536.9 1441.3,528.6 1440.3,520.3 1441.3,510 1442.6,503.7 1440.6,493.4 1438.5,485.1 1434.4,476.8 1428.2,481 1422,483 1419.9,476.8 1417.8,468.6 1413.7,462.4 1409.6,456.1 1405.4,449.9 1401.3,444.8 1393,448.9 1382.7,449.9 1374.4,454.1 1366.1,462.4 1357.9,468.6 1349.6,476.8 1341.3,483 1337.2,489.2 1337.2,501.6 1335.1,512 1328.9,520.2 1322.7,526.4 1326.3,527.5 1321.1,525.5 1314.9,515.1 1308.7,502.7 1302.5,490.3 1298.4,480 1298.4,468.2 1295.3,455.8 1294.3,445.4 1291.2,450.6 1286,445.4 1281.9,439.2 1277.7,441.3 1273.6,437.2 1267.4,431 1259.1,425.8 1246.7,426.8 1234.3,426.8 1221.9,424.8 1211.6,419.6 1207.4,416.5 1201.2,417.5 1193,418.6 1184.7,415.5 1176.4,411.3 1170.2,406.1 1166.1,399.9 1162,394.8 1155.8,396.8 1159.9,402 1164,410.3 1165.1,420.6 1168.2,424.8 1170.2,419.6 1173.3,422.7 1175.4,431 1182.6,435.1 1193,434.1 1201.2,426.8 1205.4,419.6 1207.4,422.7 1211.6,431 1217.8,438.2 1221.9,445.4 1217.8,451.6 1211.6,457.8 1209.5,464 1201.2,472.3 1188.8,477.5 1176.4,482.6 1164,488.8 1151.6,494 1139.2,498.1 1128.9,501.2 1126.8,502.3 1125.8,495 1122.7,484.7 1118.6,476.4 1112.4,466.1 1106.1,455.8 1102,447.5 1096.8,439.2 1091.7,434.1 1086.5,424.8 1081.3,414.4 1077.2,408.2 1076.2,399.9 1077.2,391.7 1079.3,381.3 1081.3,371 1082.4,360.7 1084.4,350.3 1085.8,358.8 1084.8,352.6 1076.5,354.7 1066.1,352.6 1055.8,350.6 1047.5,354.7 1037.2,350.6 1026.9,344.4 1037,345.8 1035.7,340.7 1033.8,335.7 1031.3,329.3 1030.1,324.3 1028.8,319.9 1023.7,320.5 1018.7,321.8 1021.2,325.6 1017.4,324.3 1014.9,326.2 1011.1,324.3 1009.8,328.1 1011.1,333.1 1013.6,338.2 1017.4,343.2 1014.9,345.8 1013.6,350.8 1011.1,348.3 1009.8,352.1 1007.3,350.8 1004.8,347 1002.9,342.6 1004.8,340.7 1001,338.2 998.5,334.4 996,329.3 993.7,325.6 993.2,319.9 991.5,312.9 987.1,307.9 982.1,304.1 977,299 973.2,293.4 970.7,288.9 967.6,286.4 965.7,290.8 963.1,287 960.6,283.9 955.6,283.3 951.1,285.2 951.8,288.9 955.6,293.4 963.1,300.3 970.7,306.6 975.8,311.7 980.8,317.3 985.9,323.7 987.1,326.8 983.3,326.2 978.9,323 976.4,325.6 977.3,331.9 975.8,337.6 972.2,343 968.8,344.7 969.7,340.7 971.3,335.7 970.7,331.9 966.9,327.4 963.1,323 958.1,318 953,314.2 949.2,310.4 944.2,305.4 940.4,300.3 937.9,296.8 933.5,295.3 929,294 924,295.9 918.9,297.1 912.6,298.4 906.3,300.3 900,302.2 902.6,301.7 898.5,306.9 900.6,311 896.4,315.1 888.2,321.3 880.9,331.7 878.9,339.9 873.7,346.1 865.4,350.3 857.2,351.3 851,355.5 846.8,354 840.4,350.3 833.6,349 831.1,345.9 830.1,335.8 831.1,325.7 832.4,316.8 830.5,310.6 829,303.6 838.6,299.6 851,300.7 863.4,300.7 871.6,299.6 872.7,292.4 873.7,280 875.8,282.6 873.7,272.3 865.4,266.1 857.2,264 855.1,258.9 861.3,255.8 869.6,251.6 867.5,244.4 873.7,243.4 874.7,248.5 879.9,247.5 884,243.4 890.2,239.2 898.5,235.1 904.7,231 908.8,226.8 910.9,218.6 917.1,214.4 925.4,212.4 929.5,204.8 927.5,197.9 928.9,189.6 930.2,182.7 934.4,177.2 939.2,173.1 941.3,174.5 939.9,180 940.6,184.1 942.6,186.2 942,192.4 944.7,195.1 946.1,200.6 944,205.5 944.4,204.6 953.7,202.6 962,204.6 970.2,204.6 978.5,203.6 986.8,204.6 997.1,202.6 1001.2,198.4 1001.2,190.2 1003.3,181.9 1007.4,175.7 1007.4,169.5 1012.6,167.4 1015.7,173.6 1019.8,167.4 1015.7,163.3 1013.6,159.2 1014.7,156.1 1017.8,154 1026,153 1036.4,150.9 1044.6,147.8 1051.9,145.7 1052.9,142.6 1048.8,140.6 1040.5,141.6 1030.2,142.6 1019.8,144.7 1012.6,142.6 1007.4,142.6 1003.3,139.5 1002.3,132.3 1001.2,122 1002.3,111.7 1005.4,103.4 1011.6,96.2 1017.8,88.9 1024,84.8 1024,78.6 1017.8,75.5 1009.5,74.5 1003.3,80.7 1002.3,91 997.1,99.3 990.9,105.5 984.7,111.7 980.6,119.9 979.5,130.2 981.6,138.5 986.8,142.6 993,144.7 990.9,150.9 986.8,157.1 982.6,163.3 978.5,169.5 976.4,177.8 974.4,184 970.2,190.2 964,192.2 955.8,190.2 951.7,184 948.6,175.7 946.5,167.4 944.4,161.2 943.8,153 944.7,141.4 943.3,144.1 940.6,151 936.4,159.3 930.9,164.8 924,167.6 917.1,163.4 913,156.5 910.9,148.3 910.3,140 911.4,132.3 914.5,122 914.3,117.8 922.6,111.6 928.8,103.4 937.1,99.2 943.3,88.9 949.5,80.6 953.6,70.3 957.7,59.9 963.9,49.6 968.1,41.3 963.9,39.3 968.1,31 972.2,22.7 978.4,22.7 984.6,16.5 988.7,8.3 997,6.2 1009.4,0Z" fill="#0b0b0b"/>
<path d="M942.4,197.4 948.6,195.3 953.7,198.4 952.7,203.6 946.5,204.6 942.4,202.6Z" fill="#0b0b0b"/>
<path d="M984.7,172.6 987.8,170.5 988.8,175.7 985.7,179.8Z" fill="#0b0b0b"/>
<path d="M1156.1,22.7 1160.2,18.6 1165.4,20.7 1166.4,25.8 1161.2,30 1156.7,27.9Z" fill="#0b0b0b"/>
<path d="M851,357.5 857.2,360.6 867.5,361.7 875.8,358.6 886.1,354.4 900.6,351.3 917.1,350.3 929.5,348.2 937.8,347.2 942.9,350.3 941.9,358.6 944,366.8 939.8,373 946,377.2 956.4,379.2 966.7,383.4 975,389.6 987.4,393.7 993.6,389.6 997.7,381.3 1008.1,379.2 1020.5,383.4 1028.7,385.4 1041.1,386.5 1048.3,386.5 1056.5,384.4 1064.8,386.5 1071,389.6 1076.2,398.9 1076.8,407.2 1075.1,414.4 1071,407.2 1071,410.3 1075.1,416.5 1079.3,424.8 1083.4,433 1087.5,443.4 1091.7,451.6 1095.8,462 1102,472.3 1108.2,480.6 1114.4,488.8 1119.6,497.1 1122.7,503.3 1126.8,505.4 1131,508.9 1137.2,514.1 1147.5,512 1157.8,511 1166.1,508.9 1171.9,507.9 1171.3,516.2 1167.1,525.5 1162,535.8 1155.8,546.1 1147.5,558.6 1139.2,564.8 1131,571 1122.7,579.2 1116.5,587.5 1110.3,593.7 1106.1,604 1105.1,616.4 1106.1,626.8 1110.3,635 1112.4,645.4 1112.9,660.9 1106.7,669.2 1096.4,675.4 1090.2,680.6 1084,687.8 1079.8,698.2 1082.9,708.5 1081.9,716.8 1075.7,723 1069.5,727.1 1067.4,735.4 1065.4,743.6 1059.2,754 1053,762.2 1044.7,770.5 1038.5,778.8 983.7,778.8 984.8,770.5 980.6,760.2 976.5,747.8 972.4,735.4 966.1,720.9 962,706.4 955.8,694 949.6,683.7 948,673.4 949.6,658.9 954.8,646.5 956.8,634.1 955.8,623.7 951.7,611.3 948.6,601 946.7,601.6 938.4,591.2 933.3,580.9 934.3,570.6 936.4,558.2 930.2,554 924,550.9 915.7,550.9 911.6,545.8 905.4,540.6 893,540.6 882.6,543.7 870.2,548.2 864,545.8 849.6,546.8 837.2,549.9 826.8,545.8 816.5,537.5 808.2,531.3 802,521 793.7,510.6 786.5,502.4 784.4,492 786.5,481.7 789.6,471.3 788.6,461 784.4,449.6 789.6,438.3 795.1,441.2 801.3,428.8 809.6,420.6 817.9,412.3 828.2,404 832.4,395.8 836.5,385.4 840.6,377.2 844.8,368.9 848.9,359.6Z" fill="#0b0b0b"/>
<path d="M1160.9,645.4 1165.6,652.7 1167.7,663 1163.6,671.3 1161.5,683.7 1157.4,698.2 1153.2,710.6 1149.1,720.9 1139.8,726.1 1131.5,723 1128.4,712.6 1127.4,702.3 1132.6,692 1133.6,679.6 1131.5,671.3 1139.8,667.1 1148.1,663 1154.3,654.7 1158.4,647.5Z" fill="#0b0b0b"/>
<path d="M1044.4,297.9 1047.5,288.6 1053.7,280.3 1059.9,276.1 1068.2,279.3 1072.4,283.4 1068.2,287.5 1074.4,291.7 1082.7,287.5 1086.8,282.4 1081.7,279.3 1086.8,275.1 1097.2,272 1103.4,271 1097.2,276.1 1093,282.4 1088.9,286.5 1095.1,290.6 1103.4,296.8 1111.6,302 1116.8,308.2 1117.8,314.4 1111.6,318.5 1101.3,319.6 1091,317.5 1082.7,313.4 1072.4,311.3 1064.1,313.4 1057.9,309.2 1051.7,307.2 1045.5,303Z" fill="#262626"/>
<path d="M1146.8,292.7 1151.9,284.4 1159.2,279.3 1165.4,275.1 1171.6,272 1179.8,273 1182.9,278.2 1179.8,284.4 1173.6,286.5 1168.5,291.7 1171.6,296.8 1175.7,303 1179.8,309.2 1181.9,317.5 1185,311.3 1190.2,312.3 1192.2,319.6 1186,321.6 1181.9,325.8 1184,334 1187.1,344.4 1186,349.5 1175.7,351.6 1166.4,348.5 1161.2,342.3 1159.2,334 1163.3,325.8 1163.3,317.5 1157.1,311.3 1153,303 1149.9,296.8Z" fill="#262626"/>
<path d="M1051.7,130.2 1057.9,127.1 1064.1,132.3 1067.2,140.6 1062,144.7 1055.8,140.6Z" fill="#262626"/>
<path d="M1074.4,115.8 1080.6,113.7 1084.8,124 1086.8,132.3 1082.7,134.4 1078.6,128.2Z" fill="#262626"/>
<path d="M1472.2,230.6 1482.6,228.6 1490.9,220.3 1497.1,211 1502.2,200.7 1505.3,192.4 1506.4,195.5 1504.3,204.8 1499.1,215.1 1492.9,223.4 1484.7,230.6 1476.4,232.7Z" fill="#262626"/>
<path d="M1299.6,281.3 1304.8,275.1 1315.1,274.1 1329.6,275.1 1330.6,277.2 1317.2,277.2 1306.9,279.2 1301.7,287.5Z" fill="#262626"/>
<path d="M1062.7,577.2 1068.9,574.7 1075.1,577.2 1074.1,582.3 1066.9,583.4Z" fill="#262626"/>
<path d="M952.4,342 959.3,340.7 968.8,340.1 967.6,344.5 964.4,349.5 959.3,347.7 954.3,345.1Z" fill="#0b0b0b"/>
<path d="M928.4,320.5 934.1,318.6 936,323 935.4,329.3 933.5,334.4 929.7,333.8 928.4,326.8Z" fill="#0b0b0b"/>
<path d="M930.9,307.9 934.7,306.6 935.4,312.9 933.5,318 930.9,314.2Z" fill="#0b0b0b"/>
<path d="M1014.9,359.6 1021.2,360.3 1030.1,360.9 1033.8,362.8 1028.8,363.4 1021.2,362.8 1015.5,361.5Z" fill="#0b0b0b"/>
<path d="M1065.9,361.7 1072.1,359.6 1070.1,363.7Z" fill="#0b0b0b"/>
<path d="M895.4,329.6 900.6,328 902.6,330.6 897.5,331.7Z" fill="#0b0b0b"/>
<path d="M849.6,167.6 852.4,163.4 860.6,162.1 863.7,164.5 861.3,172.4 868.9,172.4 871,175.1 868.2,181.3 864.8,187.5 868.9,190.3 874.4,195.1 879.2,202 882,208.9 882.7,215.1 888.2,219.2 891.2,224.1 889.3,228.9 884.1,232.3 882.7,236.5 877.2,239.5 868.9,240.6 860.6,242.7 851,245.8 855.1,240.6 860.6,235.8 865.5,232.1 860.6,229.6 853.7,227.5 857.9,222.7 862.7,218.6 861.3,213 864.8,208.2 859.3,204.8 860.6,199.3 855.1,195.1 849.6,191 844.8,185.5 846.9,180 844.1,175.8 848.2,171.7Z" fill="#0b0b0b"/>
<path d="M822.7,229.6 820.7,222.7 824.1,217.2 822.7,211.7 828.9,207.5 834.5,204.8 837.9,200.6 843.4,198.6 847.5,200.6 851,204.8 854.4,208.2 853.1,213 855.1,217.2 854.4,222.7 851,228.2 844.1,231 835.8,232.3 827.6,231.6Z" fill="#0b0b0b"/>
<path d="M841.3,167.6 844.8,164.8 845.5,167.6 842,171Z" fill="#0b0b0b"/>
<path d="M839.3,173.1 841.3,172.4 840.7,177.2Z" fill="#0b0b0b"/>
<path d="M862.7,155.2 864.8,155.4 864.5,157.9 862.7,157.6Z" fill="#0b0b0b"/>
<path d="M872.4,141.7 874.4,141.4 874.1,146.2 872.6,145.5Z" fill="#0b0b0b"/>
<path d="M1691.2,207.2 1695.3,210.3 1696.3,222.7 1698.4,233 1700.5,245.4 1703.6,255.8 1697.4,252.7 1695.3,262 1693.2,270.2 1697.4,276.4 1691.2,275.4 1689.1,280.6 1688.1,268.2 1690.1,255.8 1688.1,243.4 1687,231 1688.1,218.6 1689.1,210.3Z" fill="#0b0b0b"/>
<path d="M1687,285.7 1693.2,290.9 1701.5,297.1 1707.7,300.2 1705.6,305.4 1697.4,311.6 1691.2,307.4 1685,309.5 1682.9,315.7 1678.8,313.6 1676.7,308.5 1682.9,303.3 1685,295Z" fill="#0b0b0b"/>
<path d="M1679.8,307.6 1687.1,316.9 1688.5,329.3 1686,338.6 1681.9,344.8 1679.8,352 1675.7,358.2 1669.5,362.4 1663.3,364.4 1657.1,366.5 1653,371.7 1648.8,368.6 1642.6,371.7 1636.4,372.7 1632.3,369.6 1626.1,368.6 1632.3,364.4 1640.6,360.3 1648.8,359.3 1655,356.1 1659.2,349.9 1665.4,343.7 1671.6,339.6 1676.7,331.3 1677.8,321 1676.7,312.7Z" fill="#0b0b0b"/>
<path d="M1635.4,371.7 1644.7,369.6 1648.8,371.7 1642.6,375.8 1636.4,376.8Z" fill="#0b0b0b"/>
<path d="M1619.9,372.7 1626.1,370.6 1630.2,374.8 1629.2,383 1626.1,388.2 1622,385.1 1619.9,378.9Z" fill="#0b0b0b"/>
<path d="M1566.7,430.3 1571.8,428.2 1572.9,435.5 1569.8,443.7 1567.7,446.8 1564.6,439.6Z" fill="#0b0b0b"/>
<path d="M1499.5,463.4 1504.7,460.3 1511.9,461.3 1510.9,466.5 1504.7,469.6 1500.5,467.5Z" fill="#0b0b0b"/>
<path d="M1335.1,521.3 1341.3,524.4 1345.5,532.6 1344.4,538.8 1339.3,541.9 1335.1,534.7 1334.1,526.4Z" fill="#0b0b0b"/>
<path d="M1566.7,469.6 1572.9,468.6 1577,470.6 1576,478.9 1572.9,485.1 1577,493.4 1585.3,497.5 1589.4,501.6 1583.2,501.6 1577,497.5 1570.8,495.4 1566.7,489.2 1563.6,483 1565.6,476.8Z" fill="#0b0b0b"/>
<path d="M1587.3,524.4 1595.6,522.3 1600.8,530.6 1599.7,538.8 1593.5,543 1588.4,536.8 1581.1,534.7 1577,532.6 1583.2,528.5Z" fill="#0b0b0b"/>
<path d="M1548.1,526.4 1560.5,512 1562.1,514 1550.5,528.1Z" fill="#0b0b0b"/>
<path d="M1589.4,505.8 1595.6,509.9 1597.7,518.2 1591.5,516.1Z" fill="#0b0b0b"/>
<path d="M1578,510.9 1585.3,512 1586.3,522.3 1580.1,520.2Z" fill="#0b0b0b"/>
<path d="M1422.7,544.1 1431,546.2 1441.3,553.4 1451.7,561.7 1459.9,567.9 1468.2,572 1474.4,580.3 1480.6,588.6 1483.7,596.8 1482.7,608.2 1476.5,607.2 1468.2,601 1459.9,592.7 1451.7,582.4 1443.4,572 1435.1,561.7 1426.9,551.3Z" fill="#0b0b0b"/>
<path d="M1481.7,611.3 1488.9,610.3 1499.2,613.4 1511.6,613.4 1524,617.5 1532.3,621.6 1537.5,623.7 1532.3,624.7 1522,622.7 1511.6,620.6 1499.2,618.5 1488.9,616.5 1482.7,614.4Z" fill="#0b0b0b"/>
<path d="M1541.6,623.3 1548.8,622.7 1557.1,624.7 1553,626.8 1544.7,625.8Z" fill="#0b0b0b"/>
<path d="M1563.3,623.7 1575.7,623.3 1586,624.1 1579.8,626.2 1567.4,626.2Z" fill="#0b0b0b"/>
<path d="M1559.2,629.5 1565.4,630.9 1567.4,634 1561.2,632.4Z" fill="#0b0b0b"/>
<path d="M1584,632 1592.2,627.8 1603.6,623.7 1598.4,628.9 1588.1,634Z" fill="#0b0b0b"/>
<path d="M1501.3,566.8 1507.5,565.8 1513.7,559.6 1524,557.5 1532.3,549.3 1540.6,543.1 1546.8,536.9 1553,541 1558.1,546.2 1550.9,549.3 1548.8,557.5 1553,565.8 1557.1,569.9 1550.9,572 1548.8,580.3 1544.7,588.6 1538.5,596.8 1532.3,598.9 1524,592.7 1515.8,592.7 1509.6,590.6 1505.4,580.3 1501.3,574.1Z" fill="#0b0b0b"/>
<path d="M1563.3,572 1571.6,568.9 1581.9,569.9 1590.2,566.8 1592.2,569.9 1584,573 1573.6,573 1565.4,576.1 1565.4,582.4 1575.7,581.3 1582.9,580.3 1581.9,583.4 1573.6,585.5 1571.6,590.6 1577.8,596.8 1579.8,603 1575.7,601 1569.5,592.7 1565.4,596.8 1564.3,607.2 1560.2,607.2 1561.2,596.8 1560.2,586.5 1561.2,578.2Z" fill="#0b0b0b"/>
<path d="M1606.7,564.8 1610.9,561.7 1611.9,567.9 1608.8,572 1610.9,578.2 1606.7,576.1 1605.7,569.9Z" fill="#0b0b0b"/>
<path d="M1598.4,593.7 1603.6,594.3 1603.6,596.8 1598.9,596.4Z" fill="#0b0b0b"/>
<path d="M1608.8,592.7 1619.1,591.7 1624.3,594.8 1617.1,595.8Z" fill="#0b0b0b"/>
<path d="M1627.1,581 1635.3,577.9 1643.6,581 1644.6,589.3 1649.8,594.4 1656,589.3 1664.3,585.1 1676.7,588.2 1691.2,593.4 1705.6,597.5 1718,599.6 1730.4,598.6 1738.7,594.4 1747,596.5 1752.1,600.6 1747,605.8 1738.7,609.9 1726.3,609.9 1718,616.1 1722.2,622.4 1730.4,628.6 1738.7,634.8 1734.6,635.8 1724.2,632.7 1713.9,626.5 1705.6,620.3 1697.4,622.4 1693.2,628.6 1685,628.6 1676.7,625.5 1670.5,621.3 1664.3,623.4 1668.4,618.2 1670.5,609.9 1662.2,603.7 1653.9,599.6 1645.7,599.6 1638.4,597.5 1633.3,591.3 1628.1,586.2Z" fill="#0b0b0b"/>
<path d="M1814.8,693.7 1821.4,697.8 1830.7,705 1829.7,706.5 1820.4,700.9 1814.2,695.1Z" fill="#0b0b0b"/>
<path d="M1889.6,678.2 1893.7,675.7 1897.5,678.6 1894.8,681.9 1890.6,681.3Z" fill="#0b0b0b"/>
<path d="M1527.9,704.4 1533.1,700.2 1545.5,696.1 1559.9,692 1570.3,685.8 1576.5,677.5 1582.7,671.3 1591,663 1599.2,656.8 1607.5,658.9 1613.7,663 1618.9,656.8 1622,650.6 1628.2,645.4 1636.4,642.3 1646.8,645.4 1657.1,645.4 1659.2,650.6 1655,656.8 1653,662 1661.2,667.1 1671.6,673.4 1679.8,677.5 1684,671.3 1686,658.9 1688.1,646.5 1691.2,638.2 1695.3,646.5 1698.4,656.8 1706.7,663 1710.9,675.4 1719.1,685.8 1727.4,694 1733.6,704.4 1739.8,712.6 1748.1,720.9 1752.2,729.2 1754.3,741.6 1752.2,754 1750.1,764.3 1746,778.8 1644.7,778.8 1640.6,770.5 1628.2,766.4 1615.8,766.4 1603.4,770.5 1588.9,778.8 1539.3,778.8 1537.2,766.4 1535.1,754 1531,741.6 1526.9,729.2 1525.8,716.8Z" fill="#0b0b0b"/>
</g>
<g id="borders" fill="none" stroke="#222" stroke-width="0.9" stroke-linejoin="round">
<path d="M78.8,15.7 78.8,143.2"/>
<path d="M78.6,143.1 88.9,143.1 91,148.2 99.2,156.5 103.4,151.3 109.6,150.3 115.8,161.7 124,172 132.3,182.4 140.6,190.6 142.6,196.8 136.4,201 132.3,207.2"/>
<path d="M171,255.4 340,255.4"/>
<path d="M339.3,254.1 340.3,251.7 347.5,258.3 357.9,262.4 362,264.9"/>
<path d="M444.7,294.4 453,290.3 459.2,288.2 475.7,288.2 479.8,278.9 484,270.7 487.1,268.6 492.2,269.6 495.3,274.8 496.4,285.1 498.4,288.9"/>
<path d="M215.8,379.8 227.1,379.2 248.8,388.1 265.4,388.1 265.4,385.4 275.7,385.4 286,394.7 294.3,403 298.4,397.8 304.7,398.8 310.9,407.1 317.1,417.4 327.4,422.6"/>
<path d="M358.1,494.4 363.3,490.3 365.4,485.1 361.2,481 363.3,473.7 374.7,473.3 374.7,482 377.8,481"/>
<path d="M377.8,482 381.9,487.2 375.7,491.3 371.6,495.4 368.5,497.5"/>
<path d="M386,497.5 394.3,491.3 404.7,488.2"/>
<path d="M398.4,512 405.7,514"/>
<path d="M412.9,523.3 415,528.5"/>
<path d="M471,510.3 465.8,519.6 467.9,527.9 471,534.1 479.2,537.2 489.6,540.3 497.4,541.3 495.8,550.6 498.9,558.9 499.5,564.1 491.6,565.5 484.4,566.1 483.4,573.4 486.5,577.5 482.3,585.8 483.4,594 481.3,599.2"/>
<path d="M499.5,564.1 504,570.7 509.2,571.3 520.6,563 515.4,555.8 512.3,551.7 524.7,554.3 533,555.8 540.2,557.9"/>
<path d="M541.2,534.1 537.1,540.3 543.3,548.6 540.2,557.9 541.2,565.1 547.4,568.2 555.7,565.1 561.9,564.1 572.2,561 579.5,562 584.7,556.8 587.8,551.7"/>
<path d="M561.9,564.1 564,556.8 561.9,548.6"/>
<path d="M579.5,562 578.4,554.8 581.6,549.6"/>
<path d="M431.7,569.2 442,572.3 452.4,576.5 460.6,582.7 468.9,588.9 477.2,588.2 481.3,594 480.3,599.2"/>
<path d="M460.6,582.7 462.7,588.9 452.4,589.9 442,594 433.7,602.3 427.5,604.4 423.4,600.2"/>
<path d="M481.3,599.2 473,602.3 464.8,608.5 461.7,618.8 465.8,629.2 471,632.3 479.2,630.2"/>
<path d="M436.8,532 438.9,538.2"/>
<path d="M481.3,599.2 491.6,594 504,589.9 520.6,598.2 537.1,595.1 555.7,588.9 572.2,587.8 586.7,582.7 595,573.4"/>
<path d="M479.2,630.1 480.3,639.2 485.4,640.3 489.6,648.5 487.5,663 483.4,667.1 487.5,671.3 485.4,680.6 481.3,681.6"/>
<path d="M485.4,640.3 495.8,636.1 508.2,632 510.2,640.3 514.4,646.5 528.8,651.6 537.1,655.8 539.2,667.1 549.5,670.3 552.6,677.5 554.7,682.7 550.5,690.9"/>
<path d="M481.3,681.6 487.5,687.8 491.6,700.2 494.7,709.5 504,703.3 514.4,708.5 524.7,704.4 528.8,690.9 541.2,687.8 550.5,690.9 552.6,703.3 561.9,705.4 571.2,707.5 572.2,716.8 574.3,727.1"/>
<path d="M524.7,704.4 535,713.7 545.4,719.9 553.6,725 547.4,736.4 559.8,738.5 570.2,735.4 575.3,729.2 574.3,735.4 564,745.7 553.6,756 551.6,766.4 549.5,777.1"/>
<path d="M553.6,756 559.8,755 566,762.2 574.3,766.4 583.6,768.9"/>
<path d="M494.7,709.5 492.7,720.9 490.6,733.3 483.4,745.7 481.3,758.1 482.3,777.1"/>
<path d="M869.9,362.4 872,372.7 874.1,381 866.8,385.1 858.6,389.3 850.3,397.5 839.9,402.7 831.7,406.8 831.3,415.1 844.1,422.4 852.4,429.6 873,443 887.5,453.4 898.9,461.6 899.9,465.3 914.4,462.7 924.7,453.4 937.1,445.1 948.5,438.5"/>
<path d="M831.3,415.1 831.3,422.4 814.1,422.4 812,432.7 806.9,441 805.8,451.3 785.2,451.3"/>
<path d="M852.4,429.6 844.1,429.6 846.1,453.4 849.3,486.4 821.3,486.4 806.9,487.5 798.6,482.3 788.3,480.2"/>
<path d="M899.9,465.3 905.1,465.8 904,482.3 899.9,488.5 887.5,490.6 879.2,494.7"/>
<path d="M928.8,350 927.8,362.4 928.8,376.9 934,383.1 934,394.4 935,403.7 937.1,418.2 935,426.5 941.2,432.7 948.5,438.5 955.7,439.9 961.9,443 966,441 969.1,457.5 966,476.1 959.8,490.6 956.7,497.8"/>
<path d="M934,394.4 939.2,387.2 945.4,381"/>
<path d="M966,441 972.2,438.9 1016.7,462.7"/>
<path d="M1023.9,387.2 1022.9,397.5 1023.9,447.2 1090.1,447.2"/>
<path d="M1023.9,447.2 1023.9,460.6 1016.7,460.6 1016.7,484.4 1009.5,488.5 1006.4,498.8 1011.5,513.3 1007.4,517.4"/>
<path d="M897.1,539.6 896.7,527.2 899.2,516.8 901.2,509.6 903.3,500.3 911.6,496.1 921.9,501.3 936.4,502.4 948.8,499.3 957.1,497.2 963.3,501.3 964.3,508.6 959.1,516.8 955,525.1 946.7,533.4 938.4,538.5 932.2,545.8 929.1,552"/>
<path d="M963.3,501.3 967.4,512.7 969.5,518.9 962.2,521 967.4,531.3 970.5,533.4 964.3,541.6 965.3,549.9 972.6,559.2 973.6,564.4"/>
<path d="M970.5,533.4 979.8,531.3 988.1,527.2 998.4,518.9 1008.7,514.8 1011.8,512.7 1017,523 1018,527.2 1029.4,536.5 1035.6,542.7"/>
<path d="M1005.6,500.3 1008.7,508.6 1011.8,512.7"/>
<path d="M1018,527.2 1025.3,516.8 1035.6,517.9 1045.9,523 1060,516.8"/>
<path d="M973.6,564.4 986,562.3 988.1,549.9 998.4,547.8 1008.7,552 1019.1,548.9 1029.4,545.8 1035.6,542.7 1045.9,547.8 1056.3,554 1060,556.1"/>
<path d="M934.3,565.4 945.7,565.4 945.7,570.6 934.3,570.6"/>
<path d="M945.7,564.4 959.1,564.4 973.6,564.4"/>
<path d="M959.1,564.4 963.3,572.6 957.1,578.8 964.3,589.2 955,593.3 948.8,601.6 952.9,607.8"/>
<path d="M986,562.3 982.9,578.8 975.7,591.2 971.5,597.4 965.3,605.7 955,610.1"/>
<path d="M786.5,481.7 793.7,478.6 802,481.7 808.2,489.9 811.3,496.1 814.4,502.4 802,501.3 787.5,501.3 793.7,507.5 791.7,510.6"/>
<path d="M814.4,502.4 822.7,506.5 828.9,504.4 831,512.7 835.1,521 839.2,516.8 847.5,515.8 851.6,509.6 855.8,507.5 864,498.2 874.4,492 882.6,490.4 888.8,498.2 897.1,505.5 901.2,509.6"/>
<path d="M799.9,518.9 808.2,516.8 812.4,523 810.3,531.3 816.5,533.4"/>
<path d="M812.4,523 822.7,527.2 831,523 835.1,521"/>
<path d="M831,523 837.2,533.4 836.1,546.8"/>
<path d="M847.5,515.8 852.7,518.9 864,517.9 866.1,514.8 882.6,516.8 888.8,514.8 897.1,516.8"/>
<path d="M864,517.9 862,533.4 864,545.8"/>
<path d="M882.6,516.8 883.7,531.3 882.6,543.7"/>
<path d="M887.8,515.8 888.8,541.6"/>
<path d="M951.7,609.3 974.4,609.3 979.6,620.6 991,621.7 992,615.5 1005.4,617.5 1007.5,638.2 1017.8,639.2 1017.8,650.6 1006.5,650.6 1006.5,671.3 1011.6,677.5"/>
<path d="M948,674.4 955.8,673.4 968.2,675.4 986.8,676.5 991,679.6 1011.6,677.9 1024,677.1"/>
<path d="M1000.3,681.6 1000.3,704.4 995.1,704.4 994.7,723 997.2,733.3 1003.4,733.3 1011.6,725 1022,727.1 1028.2,720.9 1034.4,712.6 1042.6,707.5 1046.8,705.4 1060.2,706.4 1063.3,718.8 1063.3,727.1 1065.4,733.3"/>
<path d="M975.5,743.6 978.6,742.6 982.7,746.7 991,747.8 994.7,743.6 994.7,723"/>
<path d="M1024,677.1 1028.2,683.7 1034.4,689.9 1038.5,700.2 1046.8,705.4"/>
<path d="M1024,677.1 1034.4,679.6 1044.7,669.2 1053,666.1 1065.4,667.1 1068.5,673.4 1068.5,687.8 1065.4,698.2 1060.2,706.4"/>
<path d="M1034.4,601 1034.4,619.6 1026.1,627.9 1025.1,640.3 1032.3,643.4 1037.5,642.3 1044.7,650.6 1049.3,652.7 1049.9,640.3 1042.6,639.2 1042.6,627.9 1046.8,623.7 1057.1,624.8 1071.6,631 1072.6,642.3 1069.5,650.6 1065.4,656.8 1054,663 1053,666.1"/>
<path d="M1047.8,601 1050.9,611.3 1057.1,621.7 1058.1,624.8"/>
<path d="M1074.7,631 1076.7,642.3 1078.8,652.7 1081.9,663 1080.9,673.4 1084,665.1 1081.9,656.8 1077.8,652.7"/>
<path d="M1065.4,656.8 1071.6,658.9 1075.7,667.1 1080.9,673.4"/>
<path d="M1079.8,640.3 1090.2,642.3 1102.6,639.2 1110.9,636.1"/>
<path d="M1057.1,728.1 1060.2,726.1 1063.3,729.2 1062.3,735.4 1058.1,736.4 1057.1,728.1"/>
<path d="M1038.5,751.9 1043.7,746.7 1047.8,749.8 1044.7,756 1040.6,757.1 1038.5,751.9"/>
<path d="M1126.8,506.9 1135.1,519.3 1151.6,529.6 1155.8,529.6 1139.2,546.1 1118.6,553.4 1110.3,552.4 1102,556.5 1089.6,551.3 1083.4,547.2 1079.3,539.9 1071,527.5 1077.2,517.2 1081.3,506.9 1088.6,495.5 1087.5,488.3 1088.6,480"/>
<path d="M1088.6,495.5 1095.8,491.4 1108.2,494.5 1120.6,503.8"/>
<path d="M1118.6,553.4 1113.4,562.7 1113.4,579.2 1117.5,585.4"/>
<path d="M1083.4,547.2 1080.3,554.4 1076.2,562.7 1075.1,571 1077.2,577.2 1074.1,581.3 1104.1,602 1108.2,604"/>
<path d="M1083.4,547.2 1073.1,550.3 1060.7,551.3 1058.6,562.7 1052.4,573 1049.3,579.2 1062.7,581.3 1074.1,581.3"/>
<path d="M1040,549.3 1048.3,552.4 1060.7,551.3"/>
<path d="M1049.3,579.2 1046.2,587.5 1046.2,595.8 1049.3,608.2 1054.5,620.6 1060.7,624.7 1073.1,630.9 1075.1,634 1079.3,641.2 1093.7,642.3 1111.3,637.1"/>
<path d="M872.7,300.1 884,302.7 898.5,306.9"/>
<path d="M830.3,311 841.7,312 843.7,321.3 839.6,331.7 842.7,342 841.7,349.3"/>
<path d="M908.2,247.8 913.4,247.8 916.5,250.9 924.7,254 926.8,258.2 923.7,263.3 921.6,271.6 917.5,275.7 919.6,284 922.7,292.3 922.3,296"/>
<path d="M919.6,222 918.5,230.3 916.5,237.5 919.6,245.8 922.7,253 925.8,257.1 928.9,262.3 937.1,263.3 943.3,261.3 951.6,263.3 959.9,261.3 958.8,256.1"/>
<path d="M908.2,247.8 912.3,244.7 918.5,245.8"/>
<path d="M963.6,208.6 965,219.9 964,228.2 967.1,236.5 964,240.6 955.7,242.7 950.6,246.8 952.6,252 958.8,256.1 964,257.1 972.3,254 982.6,255.1 988.8,248.9 980.5,245.8 972.3,242.7 964,240.6"/>
<path d="M921.6,271.6 926.8,267.5 937.1,263.3 939.2,269.5 933,274.7 924.7,275.7 922.7,284"/>
<path d="M939.2,269.5 947.5,272.6 957.8,273.7 968.1,275.7 976.4,272.6 982.6,267.5 984.7,259.2 982.6,255.1"/>
<path d="M968.1,275.7 972.3,281.9"/>
<path d="M988.8,206.5 1001.2,206.5 1013.6,208.6 1017.7,219.9 1015.7,230.3 1019.8,238.5 1015.7,246.8 1011.5,253 1005.3,250.9 997.1,252 988.8,248.9"/>
<path d="M1003.3,186.9 1013.6,184.8 1026,188.9 1030.1,195.1 1026,201.3 1017.7,207.5 1013.6,208.6"/>
<path d="M1003.3,175.5 1015.7,172.4 1030.1,176.5 1038.4,182.7 1030.1,188.9 1026,188.9"/>
<path d="M1011.5,166.2 1021.9,169.3 1034.3,168.3"/>
<path d="M1036.3,160 1038.4,168.3 1038.4,182.7 1048.7,191 1057,197.2 1059.1,207.5 1065.3,215.8 1061.1,224.1 1054.9,226.1 1046.7,230.3 1038.4,232.3 1026,231.3 1015.7,230.3"/>
<path d="M1030.1,195.1 1038.4,191 1048.7,191"/>
<path d="M1054.9,226.1 1065.3,224.1 1073.5,228.2 1077.7,236.5 1088,238.5 1100,240.6"/>
<path d="M1011.5,253 1015.7,259.2 1011.5,263.3 1019.8,265.4 1030.1,263.3 1038.4,261.3 1044.6,267.5 1048.7,275.7 1046.7,284 1054.9,281.9"/>
<path d="M1038.4,261.3 1046.7,265.4 1050.8,273.7 1048.7,279.9"/>
<path d="M982.6,267.5 992.9,261.3 1005.3,259.2 1011.5,263.3 1005.3,271.6 997.1,277.8 984.7,278.8 978.5,273.7 976.4,272.6"/>
<path d="M1005.3,271.6 999.1,281.9 1005.3,288.1 1011.5,292.3 1019.8,292.3 1030.1,294.3 1042.5,291.2 1046.7,284"/>
<path d="M1011.5,292.3 1009.5,300.5 1011.5,308.8 1015.7,317.1 1026,318.1 1036.3,315 1044.6,317.1 1043.6,323.3"/>
<path d="M997.1,277.8 1001.2,288.1 1005.3,296.4 1003.3,304.7 1007.4,312.9 1007.4,319.1 997.1,323.3"/>
<path d="M1007.4,319.1 1015.7,317.1"/>
<path d="M934,204.4 939.2,205.5"/>
<path d="M1084.8,352 1095.1,349.9 1107.5,348.9 1119.9,346.8 1131.3,345.8 1136.5,343.7 1134.4,333.4 1132.4,325.1 1131.3,321 1128.2,316.9 1117.9,312.7"/>
<path d="M1111.7,300.3 1126.1,306.5 1142.7,309.6 1148.9,314.8"/>
<path d="M1131.3,321 1140.6,325.1 1146.8,330.3 1151,325.1 1157.2,327.2"/>
<path d="M1136.5,343.7 1140.6,356.1 1144.8,358.2 1142.7,366.5 1148.9,376.8 1153,387.2 1158.2,393.4 1157.2,396.5"/>
<path d="M1131.3,345.8 1128.2,358.2 1115.8,366.5 1104.4,372.7 1093.1,376.8 1086.9,377.9"/>
<path d="M1104.4,372.7 1102.4,381 1113.7,384.1 1132.4,395.4 1146.8,401.6 1153,401.6 1158.2,396.5 1161.3,401.6 1157.2,405.8"/>
<path d="M1102.4,381 1095.1,387.2 1086.9,393.4 1080.7,401.6 1077.6,407.8"/>
<path d="M1186.1,349.9 1192.3,343.7 1204.7,340.6 1217.1,344.8 1225.4,352 1229.5,356.1 1227.4,368.6 1225.4,378.9 1231.6,387.2 1227.4,397.5 1235.7,405.8 1239.8,414 1233.6,420.2 1231.6,427.5"/>
<path d="M1229.5,356.1 1239.8,358.2 1248.1,349.9 1258.4,346.8 1266.7,345.8 1279.1,345.8 1287.4,339.6 1295.7,343.7 1303.9,339.6 1314.3,341.7 1322.5,338.6 1332.9,339.6"/>
<path d="M1227.4,397.5 1241.9,399.6 1256.4,397.5 1270.9,391.3 1277.1,381 1287.4,376.8 1289.5,368.6 1299.8,362.4 1303.9,352 1318.4,349.9 1322.5,343.7 1322.5,338.6"/>
<path d="M1322.5,343.7 1332.9,347.9 1339.1,358.2 1334.9,372.7 1345.3,381 1337,389.2 1337,397.5 1345.3,401.6 1355.6,407.8 1370.1,412 1380,414"/>
<path d="M1318.4,360.3 1326.7,362.4 1330.8,372.7 1328.7,383 1320.5,389.2 1308.1,397.5 1299.8,405.8 1287.4,412 1279.1,418.2 1285.3,424.4 1293.6,425.4"/>
<path d="M1337,397.5 1345.3,393.4 1355.6,397.5 1370.1,402.7 1380,405.8"/>
<path d="M1199.5,290 1199.5,316.9 1186.1,315.8"/>
<path d="M1199.5,316.9 1208.8,310.7 1221.2,312.7 1225.4,321 1237.8,329.3 1250.2,337.5 1258.4,346.8"/>
<path d="M1221.2,290 1231.6,298.3 1246,304.5 1258.4,302.4 1266.7,310.7 1279.1,316.9 1285.3,310.7 1293.6,306.5"/>
<path d="M1283.3,321 1293.6,312.7 1303.9,306.5 1320.5,303.4 1337,308.6 1328.7,316.9 1318.4,321 1308.1,325.1 1297.7,327.2 1287.4,325.1 1283.3,321"/>
<path d="M1275,331.3 1285.3,327.2 1297.7,327.2 1308.1,331.3 1322.5,338.6"/>
<path d="M1126.8,474.4 1137.2,472.3 1151.6,471.3 1164,466.1 1176.4,459.9 1193,455.8 1197.1,445.4 1188.8,441.3 1182.6,435.1"/>
<path d="M1176.4,459.9 1182.6,474.4"/>
<path d="M1197.1,445.4 1203.3,437.2"/>
<path d="M1200,238.3 1215.2,240.8 1227.8,235.8 1222.7,228.2 1232.8,223.2 1227.8,213.1 1237.9,208 1255.6,203 1273.3,196.6 1283.4,197.9 1285.9,206.7 1296,209.3 1298.5,214.3 1306.1,210.5 1316.2,206.7 1326.3,220.6 1333.9,234.5 1339,238.3 1351.6,239.6 1361.7,247.2 1374.3,251 1366.8,261.1 1356.6,263.6 1366.8,264.9 1365.5,271.2 1351.6,271.2 1350.3,285.1 1341.5,287.6 1336.4,291.4 1339,304 1337.7,310.3 1326.3,319.2 1311.2,326.8 1301.1,334.3 1303.6,344.4 1308.6,352 1323.8,359.6 1326.3,369.7"/>
<path d="M1374.3,251 1376.9,254.7 1387,248.4 1402.1,240.8 1414.8,240.8 1422.3,245.9 1436.2,248.4 1438.8,233.3 1443.8,227.7 1452.7,230.7 1460.2,233.3 1464,240.8 1477.9,243.4 1490.6,244.6 1498.1,251 1510.8,253.5 1525.9,248.4 1533.5,244.6 1543.6,248.4 1538.6,263.6 1548.7,266.1 1556.2,263.6 1563.8,273.7 1548.7,276.2 1536,281.3 1525.9,286.3 1515.8,291.4 1515.8,299 1508.2,306.5 1493.1,311.6 1475.4,314.1 1460.2,309.1 1445.1,306.5 1429.9,305.3 1422.3,295.2 1409.7,288.9 1398.3,283.8 1397.1,271.2 1392,263.6 1376.9,254.7"/>
<path d="M1543.6,248.4 1553.7,244.6 1561.3,233.3 1566.3,220.6 1571.4,216.8 1581.5,214.3 1594.1,216.8 1600.5,225.7 1606.8,243.4 1616.9,253.5 1627,261.1 1629.5,266.1 1639.6,261.1 1647.2,261.1 1644.7,271.2 1637.1,281.3 1629.5,288.9 1627,301.5 1619.4,306.5 1614.4,311.6 1604.2,314.1 1594.1,321.7 1579,331.8 1573.9,334.3"/>
<path d="M1587.8,338.1 1600.5,336.4"/>
<path d="M1200,286.3 1215.2,283.8 1230.3,296.4 1250.5,299 1256.8,309.1 1265.7,311.6"/>
<path d="M1283.4,309.1 1301.1,304 1318.7,305.3 1337.7,310.3"/>
<path d="M1338.2,405.5 1351.7,412.7 1366.1,415.8 1381.7,417.9 1382.7,410.7 1368.2,404.5 1353.7,398.3 1343.4,399.3 1338.2,405.5"/>
<path d="M1384.8,410.7 1395.1,408.6 1404.4,412.7 1403.4,417.9 1386.8,417.9 1384.8,410.7"/>
<path d="M1403.4,412.7 1415.8,408.6 1428.2,406.5 1436.4,408.6 1432.3,418.9 1424,429.3 1417.8,437.5 1415.8,447.9 1411.6,452"/>
<path d="M1381.7,417.9 1382.7,427.2 1391,431.3 1386.8,439.6 1393,448.9"/>
<path d="M1391,421 1407.5,423.1 1407.5,431.3 1411.6,439.6 1409.6,447.9"/>
<path d="M1436.4,408.6 1444.7,414.8 1442.6,427.2 1448.8,435.5 1453,443.7 1457.1,449.9 1448.8,458.2 1444.7,468.6 1436.4,472.7 1440.6,485.1 1442.6,497.5 1440.6,505.8 1444.7,514"/>
<path d="M1457.1,449.9 1463.3,454.1 1461.2,445.8 1471.6,441.7 1479.8,440.6 1486,443.7 1494.3,448.9"/>
<path d="M1479.8,440.6 1477.8,452 1486,460.3 1492.2,472.7 1498.4,481 1497.4,489.2 1494.3,499.6 1498.4,505.8 1490.2,512 1484,516.1"/>
<path d="M1463.3,454.1 1459.2,464.4 1465.4,472.7 1473.6,468.6 1481.9,476.8 1486,487.2 1488.1,493.4 1475.7,495.4 1467.4,499.6 1465.4,512"/>
<path d="M1488.1,493.4 1497.4,489.2"/>
<path d="M1505.4,565.8 1509.6,569.9 1519.9,568.9 1528.2,565.8 1534.4,561.7 1538.5,553.4 1548.8,551.3 1553,547.2"/>
<path d="M1452.7,534.8 1459.9,536.9"/>
<path d="M1683.3,590.3 1683.3,626.5"/>
<path d="M112.9,23 117,37.6 125.4,51.2 135.8,51.2 146.3,62.7 150.5,73.1 167.2,85.7 177.6,104.5 181.8,119.1 200.6,130.6 217.3,133.8 227.8,135.8"/>
<path d="M236.2,133.8 246.6,146.3 248.7,156.7 229.9,160.9 217.3,167.2 215.3,179.9"/>
<path d="M306.7,290.3 317.1,299.6 327.4,305.8 333.6,309.9 339.8,326.5 348.1,332.7 366.7,336.8 374.9,349.2 368.7,361.6 362.5,374 360.5,390.6 366.7,398.8"/>
<path d="M306.7,290.3 310.9,289.3 308.8,276.9 304.7,268.6 294.3,262.8 275.7,263.4 267.4,267.6 253,264.5 244.7,272.7 245.7,287.2 253,292.4"/>
<path d="M1059.1,403.7 1067.3,418.2 1068.4,432.7 1061.1,445.1 1054.9,453.4 1057,465.8 1069.4,465.8 1073.5,474 1069.4,486.4 1067.3,498.8"/>
<path d="M1274.9,62 1256.3,68.2 1253.2,86.8 1255.3,97.2 1252.2,109.6 1266.7,128.2 1277,140.6 1274.9,153 1268.7,165.4 1289.4,171.6 1305.9,180.1"/>
<path d="M1597.7,2.1 1589.4,20.7 1581.1,45.5 1589.4,82.7 1610.1,101.3 1619.4,105.4 1618.3,124 1589.4,140.6 1568.7,142.6 1554.3,147.8 1535.7,138.5 1523.3,150.9 1498.4,165.4 1486,180.1"/>
<path d="M1594,88.9 1606.4,99.2 1618.8,107.5 1620.9,119.9 1614.7,130.2 1594,136.4"/>
<path d="M1167.1,272.2 1152.8,267.4 1145.7,253.1 1150.4,238.8 1164.8,231.6 1186.2,234 1200.6,241.2"/>
<path d="M1047.8,11.9 1045.4,33.4 1054.9,57.3 1052.5,81.2 1059.7,105.1 1066.9,121.8 1054.9,140.9 1045.4,149"/>
<path d="M999.1,22.7 994.9,31 986.7,35.1 976.3,44.4 973.2,53.7 966,62 963.9,72.4 960.8,82.7 957.7,91 960.8,96.1 953.6,99.2 949.5,107.5 948.4,119.9 950.5,132.3 951.5,142.6 947.4,153 946.4,159.2"/>
<path d="M999.1,22.7 1007.3,28.9 1013.5,36.2 1015.6,47.5 1017.7,62 1018.7,73.4"/>
<path d="M999.1,22.7 1009.4,18.6 1019.7,22.7 1025.9,14.5 1030.1,8.3 1040,11.4"/>
<path d="M1305.6,181.5 1298.5,198.2 1315.2,214.9 1334.3,234 1358.2,243.6"/>
</g>
<g id="labels" style="filter:blur(.3px)">
<text class="lbl" x="266.7" y="138.7" style="font-size:10.80px">CANADA</text>
<text class="lbl" x="310.2" y="327.4" style="font-size:11.00px">UNITED</text>
<text class="lbl" x="310.2" y="338.6" style="font-size:11.00px">STATES</text>
<text class="lbl" x="301.1" y="441.8" style="font-size:10.80px">MEXICO</text>
<text class="lbl" x="421.2" y="445.2">CUBA</text>
<text class="lbl" x="367.4" y="490.0">GUATEMALA</text>
<text class="lbl" x="419.5" y="530.3">PANAMA</text>
<text class="lbl" x="505.4" y="534.1">VENEZUELA</text>
<text class="lbl" x="466.6" y="557.1" style="font-size:10.80px">COLOMBIA</text>
<text class="lbl" x="547.8" y="552.5">GUYANA</text>
<text class="lbl" x="429.8" y="587.6">ECUADOR</text>
<text class="lbl" x="454.6" y="619.0" style="font-size:10.80px">PERU</text>
<text class="lbl" x="579.2" y="638.8" style="font-size:11.00px">BRAZIL</text>
<text class="lbl" x="512" y="678.3">BOLIVIA</text>
<text class="lbl" x="550.7" y="716.1">PARAGUAY</text>
<text class="lbl" x="475.2" y="770.5">CHILE</text>
<text class="lbl" x="562.7" y="777.8">URUGUAY</text>
<text class="lbl" x="778.3" y="89.4">ICELAND</text>
<text class="lbl" x="931.3" y="137.6">NORWAY</text>
<text class="lbl" x="963.9" y="154.4">SWEDEN</text>
<text class="lbl" x="1028.7" y="111.1">FINLAND</text>
<text class="lbl" x="1437.5" y="93.8" style="font-size:11.00px">RUSSIA</text>
<text class="lbl" x="939.8" y="196.4">DENMARK</text>
<text class="lbl" x="863.1" y="201.1" style="font-size:10.80px">UNITED</text>
<text class="lbl" x="863.1" y="212.2" style="font-size:10.80px">KINGDOM</text>
<text class="lbl" x="836.1" y="223.8">IRELAND</text>
<text class="lbl" x="909.2" y="244.9">BELGIUM</text>
<text class="lbl" x="989.9" y="230.6" style="font-size:10.80px">POLAND</text>
<text class="lbl" x="1039.1" y="219.1">BELARUS</text>
<text class="lbl" x="1059.3" y="255.1" style="font-size:10.80px">UKRAINE</text>
<text class="lbl" x="892.3" y="279.8" style="font-size:10.80px">FRANCE</text>
<text class="lbl" x="962" y="271.8">AUSTRIA</text>
<text class="lbl" x="1021.9" y="285.2">ROMANIA</text>
<text class="lbl" x="953.7" y="310.8" style="font-size:10.80px">ITALY</text>
<text class="lbl" x="1027.1" y="311.4">BULGARIA</text>
<text class="lbl" x="854" y="336.7" style="font-size:10.80px">SPAIN</text>
<text class="lbl" x="1006.4" y="338.8">GREECE</text>
<text class="lbl" x="1082.5" y="336.6" style="font-size:10.80px">TURKEY</text>
<text class="lbl" x="935.1" y="375.2">TUNISIA</text>
<text class="lbl" x="839.6" y="393.2">MOROCCO</text>
<text class="lbl" x="898.5" y="414.2">ALGERIA</text>
<text class="lbl" x="984.7" y="421.1">LIBYA</text>
<text class="lbl" x="1048.2" y="425.7" style="font-size:10.40px">EGYPT</text>
<text class="lbl" x="828.9" y="462.0">MAURITANIA</text>
<text class="lbl" x="868.6" y="484.8">MALI</text>
<text class="lbl" x="934.7" y="477.3">NIGER</text>
<text class="lbl" x="989.5" y="489.9">CHAD</text>
<text class="lbl" x="1048.8" y="496.4" style="font-size:10.80px">SUDAN</text>
<text class="lbl" x="799.3" y="496.5">SENEGAL</text>
<text class="lbl" x="871.7" y="505.2">BURKINA</text>
<text class="lbl" x="871.7" y="515.8">FASO</text>
<text class="lbl" x="820.6" y="518.3">GUINEA</text>
<text class="lbl" x="927.1" y="525.4" style="font-size:10.80px">NIGERIA</text>
<text class="lbl" x="875.2" y="534.2">GHANA</text>
<text class="lbl" x="828" y="546.6">LIBERIA</text>
<text class="lbl" x="956" y="553.8">CAMEROON</text>
<text class="lbl" x="1050.1" y="530.0">SOUTH</text>
<text class="lbl" x="1050.1" y="540.5">SUDAN</text>
<text class="lbl" x="947.7" y="585.0">GABON</text>
<text class="lbl" x="1052.9" y="590.5">RWANDA</text>
<text class="lbl" x="1101.4" y="521.8" style="font-size:10.80px">ETHIOPIA</text>
<text class="lbl" x="1100.3" y="571.7" style="font-size:10.80px">KENYA</text>
<text class="lbl" x="1084.9" y="616.6" style="font-size:10.80px">TANZANIA</text>
<text class="lbl" x="981.6" y="647.9">ANGOLA</text>
<text class="lbl" x="1037.9" y="662.8">ZAMBIA</text>
<text class="lbl" x="1080.2" y="692.4">MOZAMBIQUE</text>
<text class="lbl" x="980" y="715.1">NAMIBIA</text>
<text class="lbl" x="1023.4" y="746.2" style="font-size:10.80px">SOUTH</text>
<text class="lbl" x="1023.4" y="757.3" style="font-size:10.80px">AFRICA</text>
<text class="lbl" x="1097.7" y="487.2">ERITREA</text>
<text class="lbl" x="1153.7" y="485.1">YEMEN</text>
<text class="lbl" x="1261.3" y="267.2">KAZAKHSTAN</text>
<text class="lbl" x="1245.4" y="321.4">UZBEKISTAN</text>
<text class="lbl" x="1219.5" y="336.2">TURKMENISTAN</text>
<text class="lbl" x="1103.6" y="369.8">SYRIA</text>
<text class="lbl" x="1132.8" y="380.9">IRAQ</text>
<text class="lbl" x="1191.9" y="383.1" style="font-size:11.20px">IRAN</text>
<text class="lbl" x="1258.4" y="375.6">AFGHANISTAN</text>
<text class="lbl" x="1079.7" y="395.7">ISRAEL</text>
<text class="lbl" x="1286.8" y="399.1" style="font-size:11.00px">PAKISTAN</text>
<text class="lbl" x="1359.3" y="411.2">NEPAL</text>
<text class="lbl" x="1122.5" y="424.0" style="font-size:11.00px">SAUDI</text>
<text class="lbl" x="1122.5" y="435.2" style="font-size:11.00px">ARABIA</text>
<text class="lbl" x="1188.2" y="428.4">UNITED</text>
<text class="lbl" x="1188.2" y="439.0">ARAB</text>
<text class="lbl" x="1188.2" y="449.6">EMIRATES</text>
<text class="lbl" x="1328.9" y="449.4" style="font-size:11.40px">INDIA</text>
<text class="lbl" x="1395.1" y="436.3">BANGLADESH</text>
<text class="lbl" x="1469.9" y="463.8">LAOS</text>
<text class="lbl" x="1427.5" y="479.9">MYANMAR</text>
<text class="lbl" x="1495.7" y="487.9" style="font-size:10.80px">VIETNAM</text>
<text class="lbl" x="1477.8" y="507.8">CAMBODIA</text>
<text class="lbl" x="1579.5" y="507.1" style="font-size:10.80px">PHILIPPINES</text>
<text class="lbl" x="1569.8" y="438.8">TAIWAN</text>
<text class="lbl" x="1340.7" y="536.8">SRI LANKA</text>
<text class="lbl" x="1463.2" y="553.9">MALAYSIA</text>
<text class="lbl" x="1552.3" y="594.4" style="font-size:10.80px">INDONESIA</text>
<text class="lbl" x="1701.9" y="606.9">PAPUA NEW</text>
<text class="lbl" x="1701.9" y="617.4">GUINEA</text>
<text class="lbl" x="1648.2" y="725.8" style="font-size:10.80px">AUSTRALIA</text>
<text class="lbl" x="1472.2" y="278.1">MONGOLIA</text>
<text class="lbl" x="1478.4" y="367.0" style="font-size:11.40px">CHINA</text>
<text class="lbl" x="1604.4" y="323.2">NORTH</text>
<text class="lbl" x="1604.4" y="333.9">KOREA</text>
<text class="lbl" x="1607.9" y="350.4" style="font-size:10.80px">SOUTH</text>
<text class="lbl" x="1607.9" y="361.5" style="font-size:10.80px">KOREA</text>
<text class="lbl" x="1673" y="355.4" style="font-size:10.80px">JAPAN</text>
</g>
</svg>
<div class="mk" style="left:459.8px;top:321.9px">6</div>
<div class="mk" style="left:616px;top:714.1px">5</div>
<div class="mk" style="left:956.8px;top:223.9px">5</div>
<div class="mk" style="left:892.9px;top:254.1px">54</div>
<div class="mk" style="left:974px;top:262px">2</div>
<div class="mk" style="left:828.8px;top:336.8px">3</div>
<div class="mk" style="left:1045.9px;top:319.9px">6</div>
<div class="mk" style="left:1059.1px;top:397px">5</div>
<div class="mk" style="left:1195px;top:428.3px">4</div>
<div class="mk" style="left:1675.9px;top:358.8px">5</div>
<div class="mk" style="left:1740.8px;top:780.8px"></div>
  <div id="zoom">
    <div style="top:0;border-bottom:1px solid #2a2a2a"><b style="left:8.500px;top:15.500px;width:14px;height:3px"></b><b style="left:14px;top:10px;width:3px;height:14px"></b></div>
    <div style="top:30px"><b style="left:8.500px;top:15.500px;width:14px;height:3px"></b></div>
  </div>
  <div class="sbox" style="top:-10px"><svg width="16" height="16" viewBox="0 0 24 24" fill="none" stroke="#a8a8a8" stroke-width="2" stroke-linecap="round"><circle cx="11" cy="11" r="8"/><path d="M21 21l-4.300-4.300"/></svg><span style="top:14px">Search a city...</span></div>
  <div class="sbox" style="top:38px"><svg width="16" height="16" viewBox="0 0 24 24" fill="none" stroke="#a8a8a8" stroke-width="2" stroke-linecap="round"><circle cx="11" cy="11" r="8"/><path d="M21 21l-4.300-4.300"/></svg><span>Rechercher un lieu ou un</span></div>
  <div id="attr"><svg class="abs" style="left:5px;top:3px" width="10" height="7" viewBox="0 0 10 7"><rect width="10" height="3.500" fill="#4a7fd6"/><rect y="3.500" width="10" height="3.500" fill="#f0c93a"/></svg><span class="abs" style="left:19px;top:0">Leaflet | © CARTO</span></div>
</div>
<div id="foot"></div>
</body>
</html>
